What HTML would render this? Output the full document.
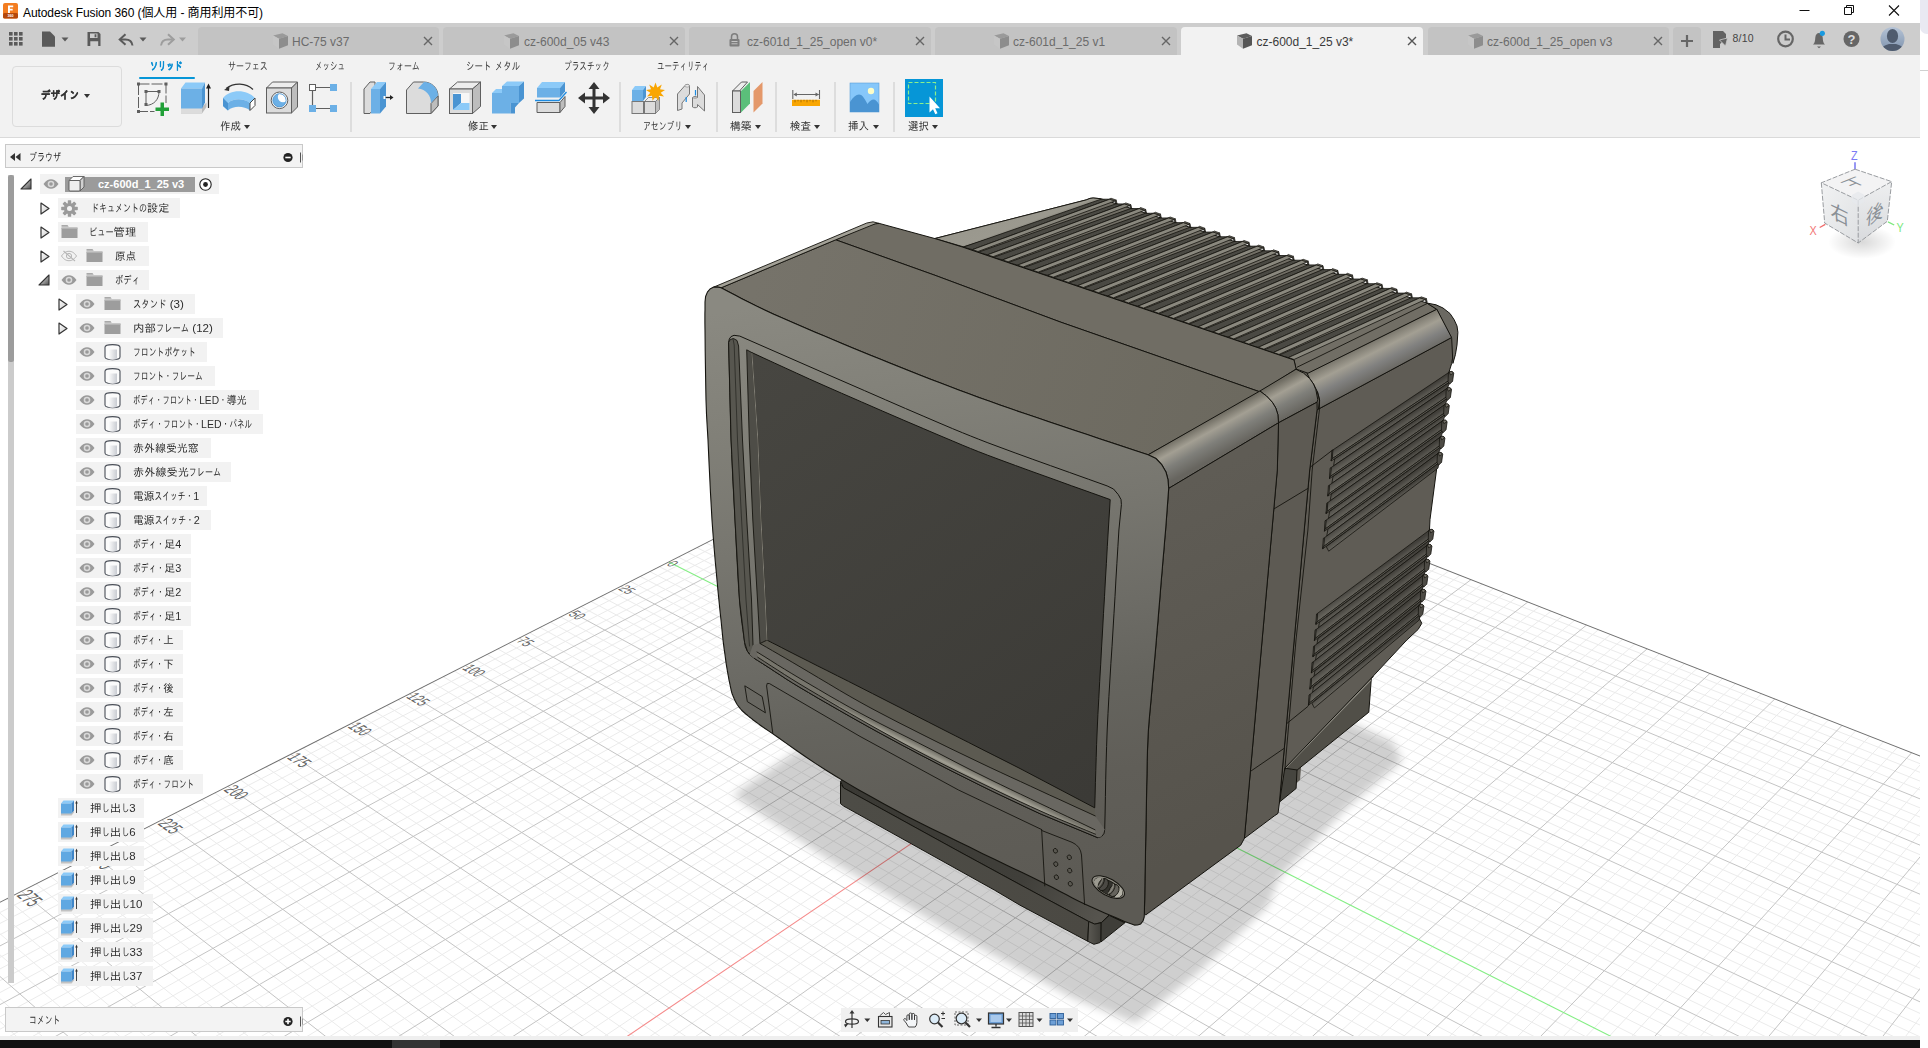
<!DOCTYPE html>
<html lang="ja"><head><meta charset="utf-8"><title>Autodesk Fusion 360</title>
<style>
html,body{margin:0;padding:0;background:#fff}
body{width:1928px;height:1048px;position:relative;overflow:hidden;font-family:"Liberation Sans","IPAGothic",sans-serif}
#canvas{position:absolute;left:0;top:0}
#nav{position:absolute;left:841px;top:1008px;width:236.5px;height:23.6px;background:#f0f0f0}
#tb{position:absolute;left:0;top:1040px;width:1920px;height:8px;background:#111}
#tb2{position:absolute;left:392px;top:1040px;width:48px;height:8px;background:#333}
#bl{position:absolute;left:0;top:1036px;width:1920px;height:4px;background:#efefef}

#title{position:absolute;left:0;top:0;width:1920px;height:23px;background:#fff}
#appico{position:absolute;left:3px;top:3px}
#ttl{position:absolute;left:23px;top:3px;font:12px "Liberation Sans","Noto Sans CJK JP",sans-serif;color:#000;white-space:nowrap;letter-spacing:-.08px}
#wc{position:absolute;left:1799px;top:0}
#tabbar{position:absolute;left:0;top:23px;width:1920px;height:32px;background:#cdcdcd}
#qa{position:absolute;left:0;top:0}
.tab{position:absolute;top:4px;height:28px;background:#c3c3c3;border-radius:4px 4px 0 0}
.tab.act{background:#f2f2f2}
.ti{position:absolute}
.tt{position:absolute;top:11.5px;font:12px "Liberation Sans",sans-serif;color:#6b6b6b;white-space:nowrap}
.tt.act{color:#3a3a3a}
#toolbar{position:absolute;left:0;top:55px;width:1920px;height:82px;background:#f2f2f2;border-bottom:1px solid #dadada}
#design{position:absolute;left:11.500px;top:10.500px;width:108px;height:59px;border:1px solid #dcdcdc;border-radius:4px;font:bold 11px "Liberation Sans","IPAGothic",sans-serif;color:#333;display:flex;align-items:center;justify-content:center;white-space:nowrap}
.k{display:inline-block;transform:scaleX(.72);transform-origin:0 50%}
.fx{display:inline-block;transform-origin:0 50%;white-space:nowrap}
.dd{display:inline-block;width:0;height:0;border-left:3.500px solid transparent;border-right:3.500px solid transparent;border-top:4px solid #333;vertical-align:middle}
.tl{position:absolute;top:4.500px;font:11px "Liberation Sans","IPAGothic",sans-serif;color:#3c3c3c;white-space:nowrap}
.tl.sel{color:#0b8fd3;font-weight:bold;-webkit-text-stroke:.35px #0b8fd3}
#ul{position:absolute;left:138.500px;top:21.800px;width:56px;height:2.600px;background:#0696d7;border-radius:1px}
.gl{position:absolute;top:65px;font:11px "Liberation Sans","IPAGothic",sans-serif;color:#333;white-space:nowrap}
.sep{position:absolute;top:27px;width:2px;height:50px;background:#dddddd}


#bh{position:absolute;left:4.500px;top:144px;width:298.500px;height:23.500px;background:#f3f3f3;border:1px solid #c9c9c9;box-sizing:border-box}
#cm{position:absolute;left:4.500px;top:1006.500px;width:298.500px;height:25px;background:#f3f3f3;border:1px solid #c9c9c9;box-sizing:border-box}
.ic{position:absolute}
.bt{position:absolute;font:11px "Liberation Sans","IPAGothic",sans-serif;color:#2e2e2e;white-space:nowrap;line-height:13px}
.rb{position:absolute;height:19.4px;background:#f2f2f2}

</style></head><body>
<svg id="canvas" width="1928" height="1048" viewBox="0 0 1928 1048">
<defs><clipPath id="cv"><rect x="0" y="138" width="1920" height="898"/></clipPath></defs>
<g clip-path="url(#cv)">
<path d="M991.9 397.6L2672.0 1060.3M984.6 401.3L2668.9 1069.4M1006.3 397.3L-581.1 1210.0M977.3 405.0L2665.8 1078.6M1014.7 400.6L-574.4 1219.4M969.9 408.8L2662.6 1087.8M1023.2 404.0L-567.6 1229.0M955.0 416.3L2656.2 1106.6M1040.2 410.7L-553.8 1248.4M947.5 420.2L2653.0 1116.2M1048.8 414.0L-546.8 1258.2M939.9 424.0L2649.7 1125.8M1057.5 417.4L-539.7 1268.1M932.3 427.9L2646.4 1135.5M1066.2 420.8L-532.5 1278.1M916.9 435.7L2639.7 1155.3M1083.7 427.7L-518.1 1298.4M909.2 439.7L2636.3 1165.4M1092.6 431.2L-510.7 1308.7M901.3 443.7L2632.8 1175.5M1101.5 434.7L-503.3 1319.1M893.5 447.7L2629.3 1185.8M1110.4 438.2L-495.8 1329.7M877.6 455.8L2622.3 1206.6M1128.5 445.3L-480.5 1351.0M869.5 459.8L2618.7 1217.2M1137.6 448.9L-472.8 1361.9M861.4 464.0L2615.0 1227.9M1146.7 452.5L-465.0 1372.8M853.3 468.1L2611.3 1238.7M1156.0 456.1L-457.1 1383.9M836.9 476.5L2603.9 1260.7M1174.6 463.4L-441.1 1406.3M828.6 480.7L2600.1 1271.8M1183.9 467.1L-432.9 1417.8M820.2 484.9L2596.2 1283.1M1193.4 470.8L-424.7 1429.3M811.8 489.2L2592.3 1294.5M1202.9 474.5L-416.4 1440.9M794.8 497.9L2584.4 1317.8M1222.0 482.0L-399.5 1464.6M786.2 502.2L2580.4 1329.6M1231.7 485.8L-390.9 1476.6M777.6 506.6L2576.4 1341.5M1241.4 489.6L-382.2 1488.8M768.8 511.1L2572.3 1353.6M1251.2 493.4L-373.5 1501.1M751.2 520.0L2563.9 1378.2M1270.9 501.2L-355.7 1526.1M742.4 524.6L2559.7 1390.7M1280.8 505.1L-346.6 1538.8M733.4 529.1L2555.4 1403.3M1290.9 509.0L-337.4 1551.6M724.4 533.7L2551.0 1416.1M1300.9 513.0L-328.2 1564.6M706.2 543.0L2542.2 1442.2M1321.3 521.0L-309.4 1591.0M697.0 547.7L2537.6 1455.4M1331.5 525.0L-299.8 1604.4M687.7 552.4L2533.1 1468.8M1341.9 529.1L-290.1 1618.0M678.3 557.1L2528.5 1482.4M1352.3 533.1L-280.3 1631.7M659.4 566.7L2519.1 1510.1M1373.2 541.4L-260.4 1659.6M649.9 571.6L2514.3 1524.2M1383.8 545.5L-250.2 1673.9M640.3 576.5L2509.4 1538.4M1394.5 549.7L-240.0 1688.2M630.6 581.4L2504.5 1552.9M1405.2 553.9L-229.6 1702.8M611.0 591.4L2494.5 1582.3M1426.9 562.4L-208.5 1732.4M601.1 596.4L2489.4 1597.3M1437.8 566.7L-197.7 1747.5M591.1 601.5L2484.2 1612.5M1448.8 571.0L-186.8 1762.7M581.1 606.6L2479.0 1627.8M1459.8 575.4L-175.8 1778.2M560.8 617.0L2468.4 1659.2M1482.2 584.1L-153.4 1809.6M550.5 622.2L2462.9 1675.2M1493.5 588.6L-142.0 1825.6M540.1 627.4L2457.4 1691.4M1504.8 593.0L-130.4 1841.8M529.7 632.8L2451.8 1707.8M1516.3 597.5L-118.7 1858.2M508.6 643.5L2440.4 1741.3M1539.4 606.6L-94.8 1891.7M497.9 648.9L2434.6 1758.4M1551.0 611.2L-82.7 1908.7M487.2 654.4L2428.7 1775.7M1562.8 615.8L-70.4 1926.0M476.3 659.9L2422.8 1793.3M1574.6 620.4L-57.9 1943.5M454.4 671.1L2410.6 1829.1M1598.4 629.8L-32.4 1979.2M443.3 676.7L2404.3 1847.5M1610.5 634.5L-19.5 1997.3M432.2 682.4L2398.0 1866.0M1622.6 639.3L-6.3 2015.8M420.9 688.1L2391.6 1884.9M1634.8 644.0L7.0 2034.4M398.1 699.7L2378.5 1923.3M1659.5 653.7L34.2 2072.5M386.6 705.6L2371.9 1943.0M1672.0 658.6L48.0 2092.0M374.9 711.5L2365.1 1963.0M1684.5 663.6L62.1 2111.7M363.2 717.5L2358.2 1983.2M1697.1 668.5L76.4 2131.7M339.5 729.6L2344.1 2024.6M1722.7 678.5L105.5 2172.4M327.5 735.7L2336.9 2045.8M1735.6 683.6L120.3 2193.3M315.4 741.8L2329.6 2067.3M1748.6 688.7L135.4 2214.4M303.1 748.0L2322.2 2089.1M1761.6 693.8L150.7 2235.8M278.4 760.6L2307.0 2133.8M1788.1 704.2L181.9 2279.6M265.9 767.0L2299.2 2156.6M1801.4 709.4L197.8 2302.0M253.3 773.4L2291.3 2179.9M1814.9 714.7L214.0 2324.7M240.6 779.9L2283.3 2203.5M1828.4 720.0L230.5 2347.7M214.8 793.0L2266.9 2251.8M1855.8 730.8L264.1 2394.8M201.8 799.6L2258.4 2276.6M1869.6 736.2L281.3 2418.9M188.6 806.3L2249.9 2301.7M1883.6 741.7L298.7 2443.4M175.4 813.1L2241.2 2327.3M1897.6 747.2L316.4 2468.2M148.5 826.7L2223.3 2379.8M1926.0 758.3L352.7 2519.0M134.9 833.7L2214.2 2406.7M1940.3 764.0L371.2 2545.0M121.1 840.7L2204.9 2434.1M1954.8 769.6L390.1 2571.5M107.3 847.7L2195.4 2461.9M1969.3 775.4L409.3 2598.3M79.2 862.0L2176.0 2519.1M1998.8 786.9L448.5 2653.3M65.0 869.2L2166.0 2548.5M2013.7 792.8L468.6 2681.5M50.6 876.5L2155.8 2578.3M2028.6 798.6L489.0 2710.2M36.2 883.9L2145.5 2608.8M2043.8 804.6L509.8 2739.3M6.8 898.8L2124.2 2671.3M2074.3 816.6L552.4 2799.0M-8.0 906.4L2113.3 2703.4M2089.8 822.6L574.3 2829.7M-23.1 914.0L2102.2 2736.2M2105.3 828.7L596.5 2860.8M-38.2 921.7L2090.8 2769.6M2121.0 834.9L619.1 2892.5M-68.9 937.4L2067.5 2838.2M2152.8 847.4L665.6 2957.6M-84.5 945.3L2055.4 2873.6M2168.8 853.7L689.4 2991.0M-100.2 953.3L2043.2 2909.6M2185.0 860.0L713.7 3025.1M-116.0 961.3L2030.7 2946.4M2201.3 866.4L738.4 3059.7M-148.2 977.7L2004.9 3022.1M2234.3 879.4L789.2 3130.9M-164.5 986.0L1991.6 3061.2M2251.0 885.9L815.3 3167.5M-181.0 994.4L1978.1 3101.1M2267.8 892.5L841.9 3204.8M-197.6 1002.8L1964.3 3141.8M2284.7 899.2L869.0 3242.8M-231.3 1020.0L1935.7 3225.8M2319.1 912.6L924.8 3321.0M-248.4 1028.7L1920.9 3269.2M2336.4 919.5L953.5 3361.3M-265.7 1037.5L1905.9 3313.5M2353.9 926.3L982.8 3402.3M-283.1 1046.4L1890.4 3358.8M2371.6 933.3L1012.7 3444.2M-318.5 1064.4L1858.6 3452.5M2407.3 947.3L1074.3 3530.5M-336.5 1073.5L1842.1 3501.0M2425.4 954.4L1106.0 3575.0M-354.6 1082.7L1825.2 3550.6M2443.6 961.5L1138.4 3620.5M-373.0 1092.1L1808.0 3601.4M2462.0 968.7L1171.5 3666.8M-410.2 1111.0L1772.2 3706.5M2499.2 983.4L1239.8 3762.6M-429.1 1120.6L1753.7 3761.0M2518.1 990.8L1275.1 3812.0M-448.1 1130.3L1734.7 3816.9M2537.1 998.2L1311.1 3862.6M-467.4 1140.1L1715.2 3874.1M2556.3 1005.7L1348.0 3914.2M-506.6 1160.1L1674.8 3993.0M2595.1 1021.0L1424.2 4021.0M-526.5 1170.2L1653.8 4054.7M2614.7 1028.7L1463.6 4076.3M-546.6 1180.4L1632.3 4118.1M2634.6 1036.5L1503.9 4132.8M-566.9 1190.7L1610.2 4183.1M2654.6 1044.3L1545.2 4190.7" stroke="#ebebeb" stroke-width="1" fill="none"/>
<path d="M962.5 412.5L2659.4 1097.2M1031.7 407.3L-560.7 1238.6M924.6 431.8L2643.1 1145.4M1074.9 424.3L-525.3 1288.2M885.5 451.7L2625.8 1196.1M1119.4 441.7L-488.2 1340.3M845.1 472.3L2607.6 1249.6M1165.2 459.7L-449.1 1395.1M803.3 493.5L2588.4 1306.1M1212.4 478.2L-408.0 1452.7M760.1 515.5L2568.1 1365.8M1261.0 497.3L-364.6 1513.5M715.3 538.3L2546.6 1429.1M1311.1 517.0L-318.8 1577.7M620.8 586.4L2499.5 1567.5M1416.0 558.2L-219.1 1717.5M571.0 611.8L2473.7 1643.4M1471.0 579.7L-164.7 1793.8M519.2 638.1L2446.2 1724.4M1527.8 602.0L-106.8 1874.9M465.4 665.5L2416.7 1811.1M1586.5 625.1L-45.2 1961.2M409.5 693.9L2385.1 1904.0M1647.1 648.9L20.5 2053.4M351.4 723.5L2351.2 2003.8M1709.9 673.5L90.8 2151.9M290.8 754.3L2314.6 2111.3M1774.8 699.0L166.2 2257.6M227.8 786.4L2275.1 2227.4M1842.0 725.4L247.1 2371.1M162.0 819.9L2232.3 2353.3M1911.7 752.7L334.4 2493.4M93.3 854.8L2185.8 2490.3M1984.0 781.1L428.7 2625.6M21.6 891.3L2135.0 2639.7M2059.0 810.5L530.9 2768.9M-53.5 929.5L2079.3 2803.6M2136.8 841.1L642.1 2924.8M-132.0 969.5L2017.9 2983.9M2217.7 872.9L763.6 3095.0M-214.4 1011.4L1950.1 3183.3M2301.8 905.9L896.6 3281.5M-300.7 1055.3L1874.7 3405.2M2389.4 940.2L1043.2 3486.9M-391.5 1101.5L1790.3 3653.3M2480.5 976.0L1205.3 3714.2M-486.9 1150.1L1695.3 3932.8M2575.6 1013.3L1385.6 3967.0M-587.4 1201.2L1587.5 4249.9M2674.7 1052.2L1587.5 4249.9" stroke="#c4c4c4" stroke-width="1" fill="none"/>
<line x1="668.9" y1="561.9" x2="2523.8" y2="1496.2" stroke="#84ee84" stroke-width="1.1" />
<line x1="1362.7" y1="537.2" x2="-270.4" y2="1645.6" stroke="#f58a8a" stroke-width="1.1" />
<line x1="998.4" y1="394.2" x2="-587.4" y2="1201.2" stroke="#6e6e6e" stroke-width="1.05" />
<line x1="998.4" y1="394.2" x2="2674.7" y2="1052.2" stroke="#6e6e6e" stroke-width="1.05" />
<text transform="matrix(1.3264 0.6702 -1.8956 0.9654 665.8 564.7)" font-family="Liberation Sans, sans-serif" font-size="6.8" fill="#454545" fill-opacity=".85">0</text>
<text transform="matrix(1.3263 0.6950 -1.9658 1.0012 617.5 589.3)" font-family="Liberation Sans, sans-serif" font-size="6.8" fill="#454545" fill-opacity=".85">25</text>
<text transform="matrix(1.3253 0.7211 -2.0399 1.0389 567.5 614.8)" font-family="Liberation Sans, sans-serif" font-size="6.8" fill="#454545" fill-opacity=".85">50</text>
<text transform="matrix(1.3233 0.7487 -2.1184 1.0789 515.5 641.3)" font-family="Liberation Sans, sans-serif" font-size="6.8" fill="#454545" fill-opacity=".85">75</text>
<text transform="matrix(1.3201 0.7780 -2.2014 1.1212 461.6 668.7)" font-family="Liberation Sans, sans-serif" font-size="6.8" fill="#454545" fill-opacity=".85">100</text>
<text transform="matrix(1.3156 0.8090 -2.2894 1.1660 405.5 697.3)" font-family="Liberation Sans, sans-serif" font-size="6.8" fill="#454545" fill-opacity=".85">125</text>
<text transform="matrix(1.3096 0.8419 -2.3828 1.2136 347.1 727.0)" font-family="Liberation Sans, sans-serif" font-size="6.8" fill="#454545" fill-opacity=".85">150</text>
<text transform="matrix(1.3021 0.8769 -2.4821 1.2641 286.3 758.0)" font-family="Liberation Sans, sans-serif" font-size="6.8" fill="#454545" fill-opacity=".85">175</text>
<text transform="matrix(1.2927 0.9140 -2.5877 1.3179 223.0 790.2)" font-family="Liberation Sans, sans-serif" font-size="6.8" fill="#454545" fill-opacity=".85">200</text>
<text transform="matrix(1.2813 0.9536 -2.7001 1.3752 156.9 823.9)" font-family="Liberation Sans, sans-serif" font-size="6.8" fill="#454545" fill-opacity=".85">225</text>
<text transform="matrix(1.2677 0.9959 -2.8201 1.4363 88.0 859.0)" font-family="Liberation Sans, sans-serif" font-size="6.8" fill="#454545" fill-opacity=".85">250</text>
<text transform="matrix(1.2515 1.0410 -2.9482 1.5015 15.9 895.7)" font-family="Liberation Sans, sans-serif" font-size="6.8" fill="#454545" fill-opacity=".85">275</text>
<defs><filter id="blur" x="-10%" y="-10%" width="120%" height="120%"><feGaussianBlur stdDeviation="4.500"/></filter></defs>
<path d="M795 752 L733 795 L824.500 857 L949 931 L1073 998 L1135.600 1023 L1198 973 L1268 906 L1279 878 L1347 808 L1402 761 L1393 742 L1347 721 L1300 700 L1150 700 Z" fill="#000" fill-opacity=".19" filter="url(#blur)"/>
<defs>
<linearGradient id="gFF" gradientUnits="userSpaceOnUse" x1="860" y1="290" x2="960" y2="925"><stop offset="0" stop-color="#8a8981"/><stop offset=".17" stop-color="#828179"/><stop offset=".38" stop-color="#77766f"/><stop offset=".54" stop-color="#6d6c66"/><stop offset=".66" stop-color="#65645e"/><stop offset=".8" stop-color="#605e58"/><stop offset="1" stop-color="#5c5a54"/></linearGradient>
<linearGradient id="gTop" gradientUnits="userSpaceOnUse" x1="760" y1="270" x2="1240" y2="420"><stop offset="0" stop-color="#76736a"/><stop offset="1" stop-color="#6c695f"/></linearGradient>
<linearGradient id="gSide" gradientUnits="userSpaceOnUse" x1="1150" y1="500" x2="1300" y2="800"><stop offset="0" stop-color="#5f5c55"/><stop offset="1" stop-color="#56534c"/></linearGradient>
<linearGradient id="gScr" gradientUnits="userSpaceOnUse" x1="760" y1="360" x2="1090" y2="800"><stop offset="0" stop-color="#474641"/><stop offset="1" stop-color="#3b3a36"/></linearGradient>
<linearGradient id="gFil" gradientUnits="userSpaceOnUse" x1="1200" y1="425" x2="1217" y2="456"><stop offset="0" stop-color="#6f6c62"/><stop offset=".3" stop-color="#a39f93"/><stop offset=".62" stop-color="#7f7f7a"/><stop offset="1" stop-color="#67655f"/></linearGradient>
<linearGradient id="gFilR" gradientUnits="userSpaceOnUse" x1="1375" y1="340" x2="1391" y2="372"><stop offset="0" stop-color="#7a776d"/><stop offset=".3" stop-color="#a39f93"/><stop offset=".62" stop-color="#818180"/><stop offset="1" stop-color="#67655f"/></linearGradient>
<linearGradient id="gFilL" gradientUnits="userSpaceOnUse" x1="1010" y1="219" x2="1016" y2="236"><stop offset="0" stop-color="#9a988e"/><stop offset=".5" stop-color="#9b998f"/><stop offset="1" stop-color="#66645c"/></linearGradient>
<linearGradient id="gStand" gradientUnits="userSpaceOnUse" x1="850" y1="790" x2="1090" y2="930"><stop offset="0" stop-color="#4d4c46"/><stop offset="1" stop-color="#4b4943"/></linearGradient>
</defs>
<polygon points="1250.0,380.0 1330.0,365.0 1330.0,420.0 1300.0,780.0 1245.0,830.0" fill="#5d5a53" stroke="none" stroke-width="1" stroke-linejoin="round" />
<polygon points="1281.5,770.0 1297.3,764.0 1296.1,788.5 1279.3,802.2" fill="#46453f" stroke="#15140f" stroke-width="1" stroke-linejoin="round" />
<polygon points="1373.2,676.1 1371.3,678.6 1368.8,712.2 1297.2,770.0 1284.8,768.2" fill="#514f48" stroke="#15140f" stroke-width="1" stroke-linejoin="round" />
<polyline points="1286.2,767.2 1370.6,680.2" fill="none" stroke="#8d8b82" stroke-width="1.3" stroke-linejoin="round" stroke-linecap="round" />
<defs><linearGradient id="gStTop" gradientUnits="userSpaceOnUse" x1="850" y1="780" x2="1100" y2="915"><stop offset="0" stop-color="#3a3934"/><stop offset=".7" stop-color="#403f3a"/><stop offset="1" stop-color="#56544e"/></linearGradient><linearGradient id="gStC" gradientUnits="userSpaceOnUse" x1="1088" y1="930" x2="1102" y2="930"><stop offset="0" stop-color="#5b5953"/><stop offset="1" stop-color="#3d3c37"/></linearGradient></defs>
<polygon points="840.5,781.2 843.7,788.0 900.0,819.0 960.0,852.0 1020.0,884.6 1088.7,921.5 1094.7,924.1 1101.6,922.4 1109.3,914.7 1124.8,922.8 1130.0,915.0 1100.0,895.0 850.0,772.0" fill="url(#gStTop)" stroke="#15140f" stroke-width="1" stroke-linejoin="round" />
<polygon points="840.5,782.4 840.5,803.6 843.7,806.1 994.3,890.0 1020.0,905.2 1087.8,941.3 1088.7,921.5 1020.0,884.6 960.0,852.0 900.0,819.0 843.7,788.0 841.5,785.5" fill="url(#gStand)" stroke="#15140f" stroke-width="1" stroke-linejoin="round" />
<polygon points="1088.7,921.5 1094.7,924.1 1101.2,922.8 1101.2,941.3 1099.9,942.6 1093.9,944.3 1087.8,941.3" fill="url(#gStC)" stroke="#15140f" stroke-width="1" stroke-linejoin="round" />
<polygon points="1101.2,922.8 1109.3,915.5 1124.8,922.8 1100.9,942.0" fill="#3f3e39" stroke="#15140f" stroke-width="1" stroke-linejoin="round" />
<polygon points="1318.4,409.1 1451.6,337.5 1455.3,342.5 1451.6,363.7 1449.0,372.0 1437.6,455.0 1436.5,470.0 1430.0,519.5 1429.4,531.2 1419.5,605.9 1419.0,618.0 1421.8,623.3 1418.1,629.5 1406.8,640.0 1373.2,676.1 1284.8,768.2 1279.3,803.5 1282.3,770.0 1309.7,470.0 1317.1,409.7" fill="#5f5c55" stroke="#15140f" stroke-width="1" stroke-linejoin="round" />
<linearGradient id="lv1" gradientUnits="userSpaceOnUse" x1="1391.3" y1="410.9" x2="1395.6" y2="417.6"><stop offset="0" stop-color="#413f3a"/><stop offset=".45" stop-color="#55534d"/><stop offset="1" stop-color="#69675f"/></linearGradient>
<polygon points="1332.8,450.0 1449.8,371.8 1450.0,379.8 1331.5,459.2" fill="url(#lv1)" stroke="#15140f" stroke-width="0.8" stroke-linejoin="round" />
<linearGradient id="lv2" gradientUnits="userSpaceOnUse" x1="1392.3" y1="420.2" x2="1395.6" y2="425.3"><stop offset="0" stop-color="#3f3d38"/><stop offset=".45" stop-color="#55534d"/><stop offset="1" stop-color="#64625b"/></linearGradient>
<polygon points="1334.7,458.8 1450.0,381.6 1447.6,388.0 1333.6,465.8" fill="url(#lv2)" stroke="#15140f" stroke-width="0.8" stroke-linejoin="round" />
<polygon points="1331.5,459.2 1450.0,379.8 1450.0,381.6 1331.2,461.0" fill="#68665f" stroke="#15140f" stroke-width="0.8" stroke-linejoin="round" />
<polygon points="1331.8,450.6 1332.8,450.0 1332.4,458.8 1331.5,459.2 1331.2,461.0" fill="#68665f" stroke="#15140f" stroke-width="0.8" stroke-linejoin="round" />
<path d="M1448.8 372.2Q1452.4 370.0 1453.7 373.4L1452.6 381.2L1449.6 384.2L1448.2 382.0Z" fill="#4d4b45" stroke="#15140f" stroke-width="0.8" stroke-linejoin="round" stroke-linecap="round" />
<path d="M1449.6 372.0Q1452.4 370.4 1453.4 373.2L1450.8 374.8Z" fill="#726f67" stroke="#15140f" stroke-width="0.7" stroke-linejoin="round" stroke-linecap="round" />
<linearGradient id="lv3" gradientUnits="userSpaceOnUse" x1="1389.3" y1="427.8" x2="1393.7" y2="434.5"><stop offset="0" stop-color="#413f3a"/><stop offset=".45" stop-color="#55534d"/><stop offset="1" stop-color="#69675f"/></linearGradient>
<polygon points="1331.1,467.6 1447.6,388.0 1447.8,396.0 1329.8,476.8" fill="url(#lv3)" stroke="#15140f" stroke-width="0.8" stroke-linejoin="round" />
<linearGradient id="lv4" gradientUnits="userSpaceOnUse" x1="1390.4" y1="437.1" x2="1393.7" y2="442.1"><stop offset="0" stop-color="#3f3d38"/><stop offset=".45" stop-color="#55534d"/><stop offset="1" stop-color="#64625b"/></linearGradient>
<polygon points="1333.0,476.4 1447.8,397.8 1445.4,404.2 1331.9,483.3" fill="url(#lv4)" stroke="#15140f" stroke-width="0.8" stroke-linejoin="round" />
<polygon points="1329.8,476.8 1447.8,396.0 1447.8,397.8 1329.5,478.6" fill="#68665f" stroke="#15140f" stroke-width="0.8" stroke-linejoin="round" />
<polygon points="1330.1,468.2 1331.1,467.6 1330.7,476.4 1329.8,476.8 1329.5,478.6" fill="#68665f" stroke="#15140f" stroke-width="0.8" stroke-linejoin="round" />
<path d="M1446.6 388.4Q1450.2 386.2 1451.5 389.6L1450.4 397.4L1447.4 400.4L1446.0 398.2Z" fill="#4d4b45" stroke="#15140f" stroke-width="0.8" stroke-linejoin="round" stroke-linecap="round" />
<path d="M1447.4 388.2Q1450.2 386.6 1451.2 389.4L1448.6 391.0Z" fill="#726f67" stroke="#15140f" stroke-width="0.7" stroke-linejoin="round" stroke-linecap="round" />
<linearGradient id="lv5" gradientUnits="userSpaceOnUse" x1="1387.4" y1="444.6" x2="1391.8" y2="451.3"><stop offset="0" stop-color="#413f3a"/><stop offset=".45" stop-color="#55534d"/><stop offset="1" stop-color="#69675f"/></linearGradient>
<polygon points="1329.4,485.1 1445.4,404.2 1445.6,412.2 1328.1,494.3" fill="url(#lv5)" stroke="#15140f" stroke-width="0.8" stroke-linejoin="round" />
<linearGradient id="lv6" gradientUnits="userSpaceOnUse" x1="1388.4" y1="454.0" x2="1391.8" y2="458.9"><stop offset="0" stop-color="#3f3d38"/><stop offset=".45" stop-color="#55534d"/><stop offset="1" stop-color="#64625b"/></linearGradient>
<polygon points="1331.3,493.9 1445.6,414.0 1443.2,420.4 1330.2,500.9" fill="url(#lv6)" stroke="#15140f" stroke-width="0.8" stroke-linejoin="round" />
<polygon points="1328.1,494.3 1445.6,412.2 1445.6,414.0 1327.8,496.1" fill="#68665f" stroke="#15140f" stroke-width="0.8" stroke-linejoin="round" />
<polygon points="1328.4,485.7 1329.4,485.1 1329.0,493.9 1328.1,494.3 1327.8,496.1" fill="#68665f" stroke="#15140f" stroke-width="0.8" stroke-linejoin="round" />
<path d="M1444.4 404.6Q1448.0 402.4 1449.3 405.8L1448.2 413.6L1445.2 416.6L1443.8 414.4Z" fill="#4d4b45" stroke="#15140f" stroke-width="0.8" stroke-linejoin="round" stroke-linecap="round" />
<path d="M1445.2 404.4Q1448.0 402.8 1449.0 405.6L1446.4 407.2Z" fill="#726f67" stroke="#15140f" stroke-width="0.7" stroke-linejoin="round" stroke-linecap="round" />
<linearGradient id="lv7" gradientUnits="userSpaceOnUse" x1="1385.5" y1="461.5" x2="1390.0" y2="468.1"><stop offset="0" stop-color="#413f3a"/><stop offset=".45" stop-color="#55534d"/><stop offset="1" stop-color="#69675f"/></linearGradient>
<polygon points="1327.7,502.6 1443.2,420.4 1443.4,428.4 1326.4,511.9" fill="url(#lv7)" stroke="#15140f" stroke-width="0.8" stroke-linejoin="round" />
<linearGradient id="lv8" gradientUnits="userSpaceOnUse" x1="1386.5" y1="470.8" x2="1389.9" y2="475.8"><stop offset="0" stop-color="#3f3d38"/><stop offset=".45" stop-color="#55534d"/><stop offset="1" stop-color="#64625b"/></linearGradient>
<polygon points="1329.6,511.4 1443.4,430.2 1441.0,436.6 1328.5,518.4" fill="url(#lv8)" stroke="#15140f" stroke-width="0.8" stroke-linejoin="round" />
<polygon points="1326.4,511.9 1443.4,428.4 1443.4,430.2 1326.1,513.6" fill="#68665f" stroke="#15140f" stroke-width="0.8" stroke-linejoin="round" />
<polygon points="1326.7,503.2 1327.7,502.6 1327.3,511.4 1326.4,511.9 1326.1,513.6" fill="#68665f" stroke="#15140f" stroke-width="0.8" stroke-linejoin="round" />
<path d="M1442.2 420.8Q1445.8 418.6 1447.1 422.0L1446.0 429.8L1443.0 432.8L1441.6 430.6Z" fill="#4d4b45" stroke="#15140f" stroke-width="0.8" stroke-linejoin="round" stroke-linecap="round" />
<path d="M1443.0 420.6Q1445.8 419.0 1446.8 421.8L1444.2 423.4Z" fill="#726f67" stroke="#15140f" stroke-width="0.7" stroke-linejoin="round" stroke-linecap="round" />
<linearGradient id="lv9" gradientUnits="userSpaceOnUse" x1="1383.5" y1="478.4" x2="1388.1" y2="485.0"><stop offset="0" stop-color="#413f3a"/><stop offset=".45" stop-color="#55534d"/><stop offset="1" stop-color="#69675f"/></linearGradient>
<polygon points="1326.0,520.2 1441.0,436.6 1441.2,444.6 1324.7,529.4" fill="url(#lv9)" stroke="#15140f" stroke-width="0.8" stroke-linejoin="round" />
<linearGradient id="lv10" gradientUnits="userSpaceOnUse" x1="1384.6" y1="487.7" x2="1388.0" y2="492.6"><stop offset="0" stop-color="#3f3d38"/><stop offset=".45" stop-color="#55534d"/><stop offset="1" stop-color="#64625b"/></linearGradient>
<polygon points="1327.9,529.0 1441.2,446.4 1438.8,452.8 1326.8,536.0" fill="url(#lv10)" stroke="#15140f" stroke-width="0.8" stroke-linejoin="round" />
<polygon points="1324.7,529.4 1441.2,444.6 1441.2,446.4 1324.4,531.2" fill="#68665f" stroke="#15140f" stroke-width="0.8" stroke-linejoin="round" />
<polygon points="1325.0,520.8 1326.0,520.2 1325.6,529.0 1324.7,529.4 1324.4,531.2" fill="#68665f" stroke="#15140f" stroke-width="0.8" stroke-linejoin="round" />
<path d="M1440.0 437.0Q1443.6 434.8 1444.9 438.2L1443.8 446.0L1440.8 449.0L1439.4 446.8Z" fill="#4d4b45" stroke="#15140f" stroke-width="0.8" stroke-linejoin="round" stroke-linecap="round" />
<path d="M1440.8 436.8Q1443.6 435.2 1444.6 438.0L1442.0 439.6Z" fill="#726f67" stroke="#15140f" stroke-width="0.7" stroke-linejoin="round" stroke-linecap="round" />
<linearGradient id="lv11" gradientUnits="userSpaceOnUse" x1="1381.6" y1="495.3" x2="1386.2" y2="501.8"><stop offset="0" stop-color="#413f3a"/><stop offset=".45" stop-color="#55534d"/><stop offset="1" stop-color="#69675f"/></linearGradient>
<polygon points="1324.3,537.8 1438.8,452.8 1439.0,460.8 1323.0,547.0" fill="url(#lv11)" stroke="#15140f" stroke-width="0.8" stroke-linejoin="round" />
<linearGradient id="lv12" gradientUnits="userSpaceOnUse" x1="1382.6" y1="504.6" x2="1386.1" y2="509.5"><stop offset="0" stop-color="#3f3d38"/><stop offset=".45" stop-color="#55534d"/><stop offset="1" stop-color="#64625b"/></linearGradient>
<polygon points="1326.2,546.5 1439.0,462.6 1438.0,468.1 1328.7,551.2" fill="url(#lv12)" stroke="#15140f" stroke-width="0.8" stroke-linejoin="round" />
<polygon points="1323.0,547.0 1439.0,460.8 1439.0,462.6 1322.7,548.8" fill="#68665f" stroke="#15140f" stroke-width="0.8" stroke-linejoin="round" />
<polygon points="1323.3,538.4 1324.3,537.8 1323.9,546.6 1323.0,547.0 1322.7,548.8" fill="#68665f" stroke="#15140f" stroke-width="0.8" stroke-linejoin="round" />
<path d="M1437.8 453.2Q1441.4 451.0 1442.7 454.4L1441.6 462.2L1438.6 465.2L1437.2 463.0Z" fill="#4d4b45" stroke="#15140f" stroke-width="0.8" stroke-linejoin="round" stroke-linecap="round" />
<path d="M1438.6 453.0Q1441.4 451.4 1442.4 454.2L1439.8 455.8Z" fill="#726f67" stroke="#15140f" stroke-width="0.7" stroke-linejoin="round" stroke-linecap="round" />
<polyline points="1310.6,466.9 1332.4,450.2" fill="none" stroke="#15140f" stroke-width="0.9" stroke-linejoin="round" stroke-linecap="round" />
<polyline points="1285.5,724.6 1307.8,706.5" fill="none" stroke="#15140f" stroke-width="0.9" stroke-linejoin="round" stroke-linecap="round" />
<linearGradient id="lv13" gradientUnits="userSpaceOnUse" x1="1373.8" y1="571.5" x2="1378.4" y2="578.1"><stop offset="0" stop-color="#413f3a"/><stop offset=".45" stop-color="#55534d"/><stop offset="1" stop-color="#69675f"/></linearGradient>
<polygon points="1317.5,613.4 1430.0,529.7 1430.2,537.7 1316.2,622.6" fill="url(#lv13)" stroke="#15140f" stroke-width="0.8" stroke-linejoin="round" />
<linearGradient id="lv14" gradientUnits="userSpaceOnUse" x1="1374.8" y1="580.8" x2="1378.3" y2="585.7"><stop offset="0" stop-color="#3f3d38"/><stop offset=".45" stop-color="#55534d"/><stop offset="1" stop-color="#64625b"/></linearGradient>
<polygon points="1319.4,622.2 1430.2,539.5 1428.0,544.7 1318.5,627.8" fill="url(#lv14)" stroke="#15140f" stroke-width="0.8" stroke-linejoin="round" />
<polygon points="1316.2,622.6 1430.2,537.7 1430.2,539.5 1315.9,624.4" fill="#68665f" stroke="#15140f" stroke-width="0.8" stroke-linejoin="round" />
<polygon points="1316.5,614.0 1317.5,613.4 1317.1,622.2 1316.2,622.6 1315.9,624.4" fill="#68665f" stroke="#15140f" stroke-width="0.8" stroke-linejoin="round" />
<path d="M1429.0 530.1Q1432.6 527.9 1433.9 531.3L1432.8 539.1L1429.8 542.1L1428.4 539.9Z" fill="#4d4b45" stroke="#15140f" stroke-width="0.8" stroke-linejoin="round" stroke-linecap="round" />
<path d="M1429.8 529.9Q1432.6 528.3 1433.6 531.1L1431.0 532.7Z" fill="#726f67" stroke="#15140f" stroke-width="0.7" stroke-linejoin="round" stroke-linecap="round" />
<linearGradient id="lv15" gradientUnits="userSpaceOnUse" x1="1372.0" y1="587.2" x2="1376.7" y2="593.6"><stop offset="0" stop-color="#413f3a"/><stop offset=".45" stop-color="#55534d"/><stop offset="1" stop-color="#69675f"/></linearGradient>
<polygon points="1316.0,629.6 1428.0,544.7 1428.2,552.7 1314.7,638.8" fill="url(#lv15)" stroke="#15140f" stroke-width="0.8" stroke-linejoin="round" />
<linearGradient id="lv16" gradientUnits="userSpaceOnUse" x1="1373.0" y1="596.5" x2="1376.6" y2="601.3"><stop offset="0" stop-color="#3f3d38"/><stop offset=".45" stop-color="#55534d"/><stop offset="1" stop-color="#64625b"/></linearGradient>
<polygon points="1317.9,638.4 1428.2,554.5 1426.0,559.7 1317.0,644.0" fill="url(#lv16)" stroke="#15140f" stroke-width="0.8" stroke-linejoin="round" />
<polygon points="1314.7,638.8 1428.2,552.7 1428.2,554.5 1314.4,640.6" fill="#68665f" stroke="#15140f" stroke-width="0.8" stroke-linejoin="round" />
<polygon points="1315.0,630.2 1316.0,629.6 1315.6,638.4 1314.7,638.8 1314.4,640.6" fill="#68665f" stroke="#15140f" stroke-width="0.8" stroke-linejoin="round" />
<path d="M1427.0 545.1Q1430.6 542.9 1431.9 546.3L1430.8 554.1L1427.8 557.1L1426.4 554.9Z" fill="#4d4b45" stroke="#15140f" stroke-width="0.8" stroke-linejoin="round" stroke-linecap="round" />
<path d="M1427.8 544.9Q1430.6 543.3 1431.6 546.1L1429.0 547.7Z" fill="#726f67" stroke="#15140f" stroke-width="0.7" stroke-linejoin="round" stroke-linecap="round" />
<linearGradient id="lv17" gradientUnits="userSpaceOnUse" x1="1370.2" y1="602.8" x2="1375.0" y2="609.2"><stop offset="0" stop-color="#413f3a"/><stop offset=".45" stop-color="#55534d"/><stop offset="1" stop-color="#69675f"/></linearGradient>
<polygon points="1314.5,645.8 1426.0,559.7 1426.2,567.7 1313.2,655.0" fill="url(#lv17)" stroke="#15140f" stroke-width="0.8" stroke-linejoin="round" />
<linearGradient id="lv18" gradientUnits="userSpaceOnUse" x1="1371.3" y1="612.0" x2="1374.9" y2="616.9"><stop offset="0" stop-color="#3f3d38"/><stop offset=".45" stop-color="#55534d"/><stop offset="1" stop-color="#64625b"/></linearGradient>
<polygon points="1316.4,654.6 1426.2,569.5 1424.0,574.7 1315.5,660.2" fill="url(#lv18)" stroke="#15140f" stroke-width="0.8" stroke-linejoin="round" />
<polygon points="1313.2,655.0 1426.2,567.7 1426.2,569.5 1312.9,656.8" fill="#68665f" stroke="#15140f" stroke-width="0.8" stroke-linejoin="round" />
<polygon points="1313.5,646.4 1314.5,645.8 1314.1,654.6 1313.2,655.0 1312.9,656.8" fill="#68665f" stroke="#15140f" stroke-width="0.8" stroke-linejoin="round" />
<path d="M1425.0 560.1Q1428.6 557.9 1429.9 561.3L1428.8 569.1L1425.8 572.1L1424.4 569.9Z" fill="#4d4b45" stroke="#15140f" stroke-width="0.8" stroke-linejoin="round" stroke-linecap="round" />
<path d="M1425.8 559.9Q1428.6 558.3 1429.6 561.1L1427.0 562.7Z" fill="#726f67" stroke="#15140f" stroke-width="0.7" stroke-linejoin="round" stroke-linecap="round" />
<linearGradient id="lv19" gradientUnits="userSpaceOnUse" x1="1368.5" y1="618.4" x2="1373.3" y2="624.7"><stop offset="0" stop-color="#413f3a"/><stop offset=".45" stop-color="#55534d"/><stop offset="1" stop-color="#69675f"/></linearGradient>
<polygon points="1313.0,662.0 1424.0,574.7 1424.2,582.7 1311.7,671.2" fill="url(#lv19)" stroke="#15140f" stroke-width="0.8" stroke-linejoin="round" />
<linearGradient id="lv20" gradientUnits="userSpaceOnUse" x1="1369.5" y1="627.6" x2="1373.2" y2="632.4"><stop offset="0" stop-color="#3f3d38"/><stop offset=".45" stop-color="#55534d"/><stop offset="1" stop-color="#64625b"/></linearGradient>
<polygon points="1314.9,670.8 1424.2,584.5 1422.0,589.7 1314.0,676.4" fill="url(#lv20)" stroke="#15140f" stroke-width="0.8" stroke-linejoin="round" />
<polygon points="1311.7,671.2 1424.2,582.7 1424.2,584.5 1311.4,673.0" fill="#68665f" stroke="#15140f" stroke-width="0.8" stroke-linejoin="round" />
<polygon points="1312.0,662.6 1313.0,662.0 1312.6,670.8 1311.7,671.2 1311.4,673.0" fill="#68665f" stroke="#15140f" stroke-width="0.8" stroke-linejoin="round" />
<path d="M1423.0 575.1Q1426.6 572.9 1427.9 576.3L1426.8 584.1L1423.8 587.1L1422.4 584.9Z" fill="#4d4b45" stroke="#15140f" stroke-width="0.8" stroke-linejoin="round" stroke-linecap="round" />
<path d="M1423.8 574.9Q1426.6 573.3 1427.6 576.1L1425.0 577.7Z" fill="#726f67" stroke="#15140f" stroke-width="0.7" stroke-linejoin="round" stroke-linecap="round" />
<linearGradient id="lv21" gradientUnits="userSpaceOnUse" x1="1366.8" y1="634.0" x2="1371.6" y2="640.3"><stop offset="0" stop-color="#413f3a"/><stop offset=".45" stop-color="#55534d"/><stop offset="1" stop-color="#69675f"/></linearGradient>
<polygon points="1311.5,678.2 1422.0,589.7 1422.2,597.7 1310.2,687.4" fill="url(#lv21)" stroke="#15140f" stroke-width="0.8" stroke-linejoin="round" />
<linearGradient id="lv22" gradientUnits="userSpaceOnUse" x1="1367.8" y1="643.2" x2="1371.5" y2="648.0"><stop offset="0" stop-color="#3f3d38"/><stop offset=".45" stop-color="#55534d"/><stop offset="1" stop-color="#64625b"/></linearGradient>
<polygon points="1313.4,687.0 1422.2,599.5 1420.0,604.7 1312.5,692.6" fill="url(#lv22)" stroke="#15140f" stroke-width="0.8" stroke-linejoin="round" />
<polygon points="1310.2,687.4 1422.2,597.7 1422.2,599.5 1309.9,689.2" fill="#68665f" stroke="#15140f" stroke-width="0.8" stroke-linejoin="round" />
<polygon points="1310.5,678.8 1311.5,678.2 1311.1,687.0 1310.2,687.4 1309.9,689.2" fill="#68665f" stroke="#15140f" stroke-width="0.8" stroke-linejoin="round" />
<path d="M1421.0 590.1Q1424.6 587.9 1425.9 591.3L1424.8 599.1L1421.8 602.1L1420.4 599.9Z" fill="#4d4b45" stroke="#15140f" stroke-width="0.8" stroke-linejoin="round" stroke-linecap="round" />
<path d="M1421.8 589.9Q1424.6 588.3 1425.6 591.1L1423.0 592.7Z" fill="#726f67" stroke="#15140f" stroke-width="0.7" stroke-linejoin="round" stroke-linecap="round" />
<linearGradient id="lv23" gradientUnits="userSpaceOnUse" x1="1365.0" y1="649.5" x2="1369.9" y2="655.9"><stop offset="0" stop-color="#413f3a"/><stop offset=".45" stop-color="#55534d"/><stop offset="1" stop-color="#69675f"/></linearGradient>
<polygon points="1310.0,694.4 1420.0,604.7 1420.2,612.7 1308.7,703.6" fill="url(#lv23)" stroke="#15140f" stroke-width="0.8" stroke-linejoin="round" />
<linearGradient id="lv24" gradientUnits="userSpaceOnUse" x1="1366.0" y1="658.8" x2="1369.7" y2="663.6"><stop offset="0" stop-color="#3f3d38"/><stop offset=".45" stop-color="#55534d"/><stop offset="1" stop-color="#64625b"/></linearGradient>
<polygon points="1311.9,703.2 1420.2,614.5 1419.2,620.0 1314.4,707.9" fill="url(#lv24)" stroke="#15140f" stroke-width="0.8" stroke-linejoin="round" />
<polygon points="1308.7,703.6 1420.2,612.7 1420.2,614.5 1308.4,705.4" fill="#68665f" stroke="#15140f" stroke-width="0.8" stroke-linejoin="round" />
<polygon points="1309.0,695.0 1310.0,694.4 1309.6,703.2 1308.7,703.6 1308.4,705.4" fill="#68665f" stroke="#15140f" stroke-width="0.8" stroke-linejoin="round" />
<path d="M1419.0 605.1Q1422.6 602.9 1423.9 606.3L1422.8 614.1L1419.8 617.1L1418.4 614.9Z" fill="#4d4b45" stroke="#15140f" stroke-width="0.8" stroke-linejoin="round" stroke-linecap="round" />
<path d="M1419.8 604.9Q1422.6 603.3 1423.6 606.1L1421.0 607.7Z" fill="#726f67" stroke="#15140f" stroke-width="0.7" stroke-linejoin="round" stroke-linecap="round" />
<polygon points="935.0,238.5 1086.2,199.9 1090.0,198.4 1093.1,198.0 1100.6,198.7 1426.8,303.0 1436.8,309.3 1308.5,373.4 1296.1,369.0 1294.0,360.0 963.0,247.2" fill="#716e65" stroke="#15140f" stroke-width="1" stroke-linejoin="round" />
<polygon points="935.0,238.5 1086.2,199.9 1090.0,198.4 1093.1,198.0 1100.6,198.7 1101.8,203.0 963.6,246.9" fill="url(#gFilL)" stroke="#15140f" stroke-width="0.9" stroke-linejoin="round" />
<polygon points="963.0,247.2 1101.0,199.2 1109.7,199.2 972.5,249.6" fill="#4a4943" stroke="#15140f" stroke-width="0.8" stroke-linejoin="round" />
<polygon points="972.5,249.6 1109.7,199.2 1115.2,200.9 978.0,251.5" fill="#8a887e" stroke="#15140f" stroke-width="0.8" stroke-linejoin="round" />
<polygon points="1109.7,199.2 1110.9,198.2 1116.2,200.0 1115.2,200.9" fill="#6c6a62" stroke="#15140f" stroke-width="0.7" stroke-linejoin="round" />
<polygon points="1115.2,200.9 1116.2,200.0 1117.0,203.7 1115.8,203.9" fill="#403f3a" stroke="#15140f" stroke-width="0.7" stroke-linejoin="round" />
<polygon points="978.0,252.3 1115.8,203.9 1124.5,203.9 987.5,254.8" fill="#4a4943" stroke="#15140f" stroke-width="0.8" stroke-linejoin="round" />
<polygon points="987.5,254.8 1124.5,203.9 1129.9,205.6 993.1,256.7" fill="#8a887e" stroke="#15140f" stroke-width="0.8" stroke-linejoin="round" />
<polygon points="1124.5,203.9 1125.7,202.9 1130.9,204.7 1129.9,205.6" fill="#6c6a62" stroke="#15140f" stroke-width="0.7" stroke-linejoin="round" />
<polygon points="1129.9,205.6 1130.9,204.7 1131.7,208.4 1130.5,208.6" fill="#403f3a" stroke="#15140f" stroke-width="0.7" stroke-linejoin="round" />
<polygon points="993.1,257.5 1130.5,208.6 1139.3,208.5 1002.6,259.9" fill="#4a4943" stroke="#15140f" stroke-width="0.8" stroke-linejoin="round" />
<polygon points="1002.6,259.9 1139.3,208.5 1144.7,210.3 1008.1,261.8" fill="#8a887e" stroke="#15140f" stroke-width="0.8" stroke-linejoin="round" />
<polygon points="1139.3,208.5 1140.5,207.5 1145.7,209.4 1144.7,210.3" fill="#6c6a62" stroke="#15140f" stroke-width="0.7" stroke-linejoin="round" />
<polygon points="1144.7,210.3 1145.7,209.4 1146.5,213.1 1145.3,213.3" fill="#403f3a" stroke="#15140f" stroke-width="0.7" stroke-linejoin="round" />
<polygon points="1008.1,262.6 1145.3,213.3 1154.0,213.2 1017.6,265.1" fill="#4a4943" stroke="#15140f" stroke-width="0.8" stroke-linejoin="round" />
<polygon points="1017.6,265.1 1154.0,213.2 1159.5,215.0 1023.2,267.0" fill="#8a887e" stroke="#15140f" stroke-width="0.8" stroke-linejoin="round" />
<polygon points="1154.0,213.2 1155.2,212.2 1160.5,214.1 1159.5,215.0" fill="#6c6a62" stroke="#15140f" stroke-width="0.7" stroke-linejoin="round" />
<polygon points="1159.5,215.0 1160.5,214.1 1161.3,217.8 1160.1,218.0" fill="#403f3a" stroke="#15140f" stroke-width="0.7" stroke-linejoin="round" />
<polygon points="1023.2,267.8 1160.1,218.0 1168.8,217.9 1032.7,270.2" fill="#4a4943" stroke="#15140f" stroke-width="0.8" stroke-linejoin="round" />
<polygon points="1032.7,270.2 1168.8,217.9 1174.3,219.7 1038.2,272.1" fill="#8a887e" stroke="#15140f" stroke-width="0.8" stroke-linejoin="round" />
<polygon points="1168.8,217.9 1170.0,216.9 1175.3,218.8 1174.3,219.7" fill="#6c6a62" stroke="#15140f" stroke-width="0.7" stroke-linejoin="round" />
<polygon points="1174.3,219.7 1175.3,218.8 1176.1,222.5 1174.9,222.7" fill="#403f3a" stroke="#15140f" stroke-width="0.7" stroke-linejoin="round" />
<polygon points="1038.2,272.9 1174.9,222.7 1183.6,222.6 1047.7,275.3" fill="#4a4943" stroke="#15140f" stroke-width="0.8" stroke-linejoin="round" />
<polygon points="1047.7,275.3 1183.6,222.6 1189.0,224.4 1053.3,277.2" fill="#8a887e" stroke="#15140f" stroke-width="0.8" stroke-linejoin="round" />
<polygon points="1183.6,222.6 1184.8,221.6 1190.0,223.5 1189.0,224.4" fill="#6c6a62" stroke="#15140f" stroke-width="0.7" stroke-linejoin="round" />
<polygon points="1189.0,224.4 1190.0,223.5 1190.8,227.2 1189.6,227.4" fill="#403f3a" stroke="#15140f" stroke-width="0.7" stroke-linejoin="round" />
<polygon points="1053.3,278.0 1189.6,227.4 1198.3,227.3 1062.8,280.5" fill="#4a4943" stroke="#15140f" stroke-width="0.8" stroke-linejoin="round" />
<polygon points="1062.8,280.5 1198.3,227.3 1203.8,229.1 1068.3,282.4" fill="#8a887e" stroke="#15140f" stroke-width="0.8" stroke-linejoin="round" />
<polygon points="1198.3,227.3 1199.5,226.3 1204.8,228.2 1203.8,229.1" fill="#6c6a62" stroke="#15140f" stroke-width="0.7" stroke-linejoin="round" />
<polygon points="1203.8,229.1 1204.8,228.2 1205.6,231.9 1204.4,232.1" fill="#403f3a" stroke="#15140f" stroke-width="0.7" stroke-linejoin="round" />
<polygon points="1068.3,283.2 1204.4,232.1 1213.1,232.0 1077.8,285.6" fill="#4a4943" stroke="#15140f" stroke-width="0.8" stroke-linejoin="round" />
<polygon points="1077.8,285.6 1213.1,232.0 1218.6,233.8 1083.4,287.5" fill="#8a887e" stroke="#15140f" stroke-width="0.8" stroke-linejoin="round" />
<polygon points="1213.1,232.0 1214.3,231.0 1219.6,232.9 1218.6,233.8" fill="#6c6a62" stroke="#15140f" stroke-width="0.7" stroke-linejoin="round" />
<polygon points="1218.6,233.8 1219.6,232.9 1220.4,236.6 1219.2,236.8" fill="#403f3a" stroke="#15140f" stroke-width="0.7" stroke-linejoin="round" />
<polygon points="1083.4,288.3 1219.2,236.8 1227.9,236.7 1092.8,290.8" fill="#4a4943" stroke="#15140f" stroke-width="0.8" stroke-linejoin="round" />
<polygon points="1092.8,290.8 1227.9,236.7 1233.4,238.5 1098.4,292.7" fill="#8a887e" stroke="#15140f" stroke-width="0.8" stroke-linejoin="round" />
<polygon points="1227.9,236.7 1229.1,235.7 1234.4,237.6 1233.4,238.5" fill="#6c6a62" stroke="#15140f" stroke-width="0.7" stroke-linejoin="round" />
<polygon points="1233.4,238.5 1234.4,237.6 1235.2,241.3 1234.0,241.5" fill="#403f3a" stroke="#15140f" stroke-width="0.7" stroke-linejoin="round" />
<polygon points="1098.4,293.5 1234.0,241.5 1242.7,241.4 1107.9,295.9" fill="#4a4943" stroke="#15140f" stroke-width="0.8" stroke-linejoin="round" />
<polygon points="1107.9,295.9 1242.7,241.4 1248.1,243.2 1113.5,297.8" fill="#8a887e" stroke="#15140f" stroke-width="0.8" stroke-linejoin="round" />
<polygon points="1242.7,241.4 1243.9,240.4 1249.1,242.3 1248.1,243.2" fill="#6c6a62" stroke="#15140f" stroke-width="0.7" stroke-linejoin="round" />
<polygon points="1248.1,243.2 1249.1,242.3 1249.9,246.0 1248.7,246.2" fill="#403f3a" stroke="#15140f" stroke-width="0.7" stroke-linejoin="round" />
<polygon points="1113.5,298.6 1248.7,246.2 1257.4,246.1 1122.9,301.0" fill="#4a4943" stroke="#15140f" stroke-width="0.8" stroke-linejoin="round" />
<polygon points="1122.9,301.0 1257.4,246.1 1262.9,247.8 1128.5,302.9" fill="#8a887e" stroke="#15140f" stroke-width="0.8" stroke-linejoin="round" />
<polygon points="1257.4,246.1 1258.6,245.1 1263.9,246.9 1262.9,247.8" fill="#6c6a62" stroke="#15140f" stroke-width="0.7" stroke-linejoin="round" />
<polygon points="1262.9,247.8 1263.9,246.9 1264.7,250.7 1263.5,250.8" fill="#403f3a" stroke="#15140f" stroke-width="0.7" stroke-linejoin="round" />
<polygon points="1128.5,303.8 1263.5,250.8 1272.2,250.8 1138.0,306.2" fill="#4a4943" stroke="#15140f" stroke-width="0.8" stroke-linejoin="round" />
<polygon points="1138.0,306.2 1272.2,250.8 1277.7,252.5 1143.5,308.1" fill="#8a887e" stroke="#15140f" stroke-width="0.8" stroke-linejoin="round" />
<polygon points="1272.2,250.8 1273.4,249.8 1278.7,251.6 1277.7,252.5" fill="#6c6a62" stroke="#15140f" stroke-width="0.7" stroke-linejoin="round" />
<polygon points="1277.7,252.5 1278.7,251.6 1279.5,255.3 1278.3,255.5" fill="#403f3a" stroke="#15140f" stroke-width="0.7" stroke-linejoin="round" />
<polygon points="1143.5,308.9 1278.3,255.5 1287.0,255.5 1153.0,311.3" fill="#4a4943" stroke="#15140f" stroke-width="0.8" stroke-linejoin="round" />
<polygon points="1153.0,311.3 1287.0,255.5 1292.4,257.2 1158.6,313.2" fill="#8a887e" stroke="#15140f" stroke-width="0.8" stroke-linejoin="round" />
<polygon points="1287.0,255.5 1288.2,254.5 1293.4,256.3 1292.4,257.2" fill="#6c6a62" stroke="#15140f" stroke-width="0.7" stroke-linejoin="round" />
<polygon points="1292.4,257.2 1293.4,256.3 1294.2,260.0 1293.0,260.2" fill="#403f3a" stroke="#15140f" stroke-width="0.7" stroke-linejoin="round" />
<polygon points="1158.6,314.0 1293.0,260.2 1301.8,260.2 1168.1,316.5" fill="#4a4943" stroke="#15140f" stroke-width="0.8" stroke-linejoin="round" />
<polygon points="1168.1,316.5 1301.8,260.2 1307.2,261.9 1173.6,318.4" fill="#8a887e" stroke="#15140f" stroke-width="0.8" stroke-linejoin="round" />
<polygon points="1301.8,260.2 1303.0,259.2 1308.2,261.0 1307.2,261.9" fill="#6c6a62" stroke="#15140f" stroke-width="0.7" stroke-linejoin="round" />
<polygon points="1307.2,261.9 1308.2,261.0 1309.0,264.7 1307.8,264.9" fill="#403f3a" stroke="#15140f" stroke-width="0.7" stroke-linejoin="round" />
<polygon points="1173.6,319.2 1307.8,264.9 1316.5,264.9 1183.1,321.6" fill="#4a4943" stroke="#15140f" stroke-width="0.8" stroke-linejoin="round" />
<polygon points="1183.1,321.6 1316.5,264.9 1322.0,266.6 1188.7,323.5" fill="#8a887e" stroke="#15140f" stroke-width="0.8" stroke-linejoin="round" />
<polygon points="1316.5,264.9 1317.7,263.9 1323.0,265.7 1322.0,266.6" fill="#6c6a62" stroke="#15140f" stroke-width="0.7" stroke-linejoin="round" />
<polygon points="1322.0,266.6 1323.0,265.7 1323.8,269.4 1322.6,269.6" fill="#403f3a" stroke="#15140f" stroke-width="0.7" stroke-linejoin="round" />
<polygon points="1188.7,324.3 1322.6,269.6 1331.3,269.6 1198.2,326.8" fill="#4a4943" stroke="#15140f" stroke-width="0.8" stroke-linejoin="round" />
<polygon points="1198.2,326.8 1331.3,269.6 1336.8,271.3 1203.7,328.7" fill="#8a887e" stroke="#15140f" stroke-width="0.8" stroke-linejoin="round" />
<polygon points="1331.3,269.6 1332.5,268.6 1337.8,270.4 1336.8,271.3" fill="#6c6a62" stroke="#15140f" stroke-width="0.7" stroke-linejoin="round" />
<polygon points="1336.8,271.3 1337.8,270.4 1338.6,274.1 1337.4,274.3" fill="#403f3a" stroke="#15140f" stroke-width="0.7" stroke-linejoin="round" />
<polygon points="1203.7,329.5 1337.4,274.3 1346.1,274.3 1213.2,331.9" fill="#4a4943" stroke="#15140f" stroke-width="0.8" stroke-linejoin="round" />
<polygon points="1213.2,331.9 1346.1,274.3 1351.5,276.0 1218.8,333.8" fill="#8a887e" stroke="#15140f" stroke-width="0.8" stroke-linejoin="round" />
<polygon points="1346.1,274.3 1347.3,273.3 1352.5,275.1 1351.5,276.0" fill="#6c6a62" stroke="#15140f" stroke-width="0.7" stroke-linejoin="round" />
<polygon points="1351.5,276.0 1352.5,275.1 1353.3,278.8 1352.1,279.0" fill="#403f3a" stroke="#15140f" stroke-width="0.7" stroke-linejoin="round" />
<polygon points="1218.8,334.6 1352.1,279.0 1360.8,279.0 1228.3,337.0" fill="#4a4943" stroke="#15140f" stroke-width="0.8" stroke-linejoin="round" />
<polygon points="1228.3,337.0 1360.8,279.0 1366.3,280.7 1233.8,338.9" fill="#8a887e" stroke="#15140f" stroke-width="0.8" stroke-linejoin="round" />
<polygon points="1360.8,279.0 1362.0,278.0 1367.3,279.8 1366.3,280.7" fill="#6c6a62" stroke="#15140f" stroke-width="0.7" stroke-linejoin="round" />
<polygon points="1366.3,280.7 1367.3,279.8 1368.1,283.5 1366.9,283.7" fill="#403f3a" stroke="#15140f" stroke-width="0.7" stroke-linejoin="round" />
<polygon points="1233.8,339.7 1366.9,283.7 1375.6,283.7 1243.3,342.2" fill="#4a4943" stroke="#15140f" stroke-width="0.8" stroke-linejoin="round" />
<polygon points="1243.3,342.2 1375.6,283.7 1381.1,285.4 1248.9,344.1" fill="#8a887e" stroke="#15140f" stroke-width="0.8" stroke-linejoin="round" />
<polygon points="1375.6,283.7 1376.8,282.7 1382.1,284.5 1381.1,285.4" fill="#6c6a62" stroke="#15140f" stroke-width="0.7" stroke-linejoin="round" />
<polygon points="1381.1,285.4 1382.1,284.5 1382.9,288.2 1381.7,288.4" fill="#403f3a" stroke="#15140f" stroke-width="0.7" stroke-linejoin="round" />
<polygon points="1248.9,344.9 1381.7,288.4 1390.4,288.4 1258.3,347.3" fill="#4a4943" stroke="#15140f" stroke-width="0.8" stroke-linejoin="round" />
<polygon points="1258.3,347.3 1390.4,288.4 1395.9,290.1 1263.9,349.2" fill="#8a887e" stroke="#15140f" stroke-width="0.8" stroke-linejoin="round" />
<polygon points="1390.4,288.4 1391.6,287.4 1396.9,289.2 1395.9,290.1" fill="#6c6a62" stroke="#15140f" stroke-width="0.7" stroke-linejoin="round" />
<polygon points="1395.9,290.1 1396.9,289.2 1397.7,292.9 1396.5,293.1" fill="#403f3a" stroke="#15140f" stroke-width="0.7" stroke-linejoin="round" />
<polygon points="1263.9,350.0 1396.5,293.1 1405.2,293.1 1273.4,352.5" fill="#4a4943" stroke="#15140f" stroke-width="0.8" stroke-linejoin="round" />
<polygon points="1273.4,352.5 1405.2,293.1 1410.6,294.8 1279.0,354.4" fill="#8a887e" stroke="#15140f" stroke-width="0.8" stroke-linejoin="round" />
<polygon points="1405.2,293.1 1406.4,292.1 1411.6,293.9 1410.6,294.8" fill="#6c6a62" stroke="#15140f" stroke-width="0.7" stroke-linejoin="round" />
<polygon points="1410.6,294.8 1411.6,293.9 1412.4,297.6 1411.2,297.8" fill="#403f3a" stroke="#15140f" stroke-width="0.7" stroke-linejoin="round" />
<polygon points="1279.0,355.2 1411.2,297.8 1419.9,297.8 1288.4,357.6" fill="#4a4943" stroke="#15140f" stroke-width="0.8" stroke-linejoin="round" />
<polygon points="1288.4,357.6 1419.9,297.8 1425.4,299.5 1294.0,359.5" fill="#8a887e" stroke="#15140f" stroke-width="0.8" stroke-linejoin="round" />
<polygon points="1419.9,297.8 1421.1,296.8 1426.4,298.6 1425.4,299.5" fill="#6c6a62" stroke="#15140f" stroke-width="0.7" stroke-linejoin="round" />
<polygon points="1425.4,299.5 1426.4,298.6 1427.2,302.3 1426.0,302.5" fill="#403f3a" stroke="#15140f" stroke-width="0.7" stroke-linejoin="round" />
<polygon points="1426.8,303.0 1436.0,304.8 1443.0,308.0 1450.0,313.5 1454.2,319.8 1457.0,326.0 1457.9,332.3 1457.0,345.0 1455.4,354.7 1452.9,363.4 1451.7,338.5 1436.8,309.3" fill="#6b6962" stroke="#15140f" stroke-width="1" stroke-linejoin="round" />
<polygon points="1307.2,373.6 1436.8,309.3 1451.6,337.5 1318.4,409.1 1319.6,400.0 1317.5,392.0 1313.5,384.0 1309.7,378.6" fill="url(#gFilR)" stroke="#15140f" stroke-width="1" stroke-linejoin="round" />
<polyline points="1297.3,367.1 1426.8,303.7" fill="none" stroke="#15140f" stroke-width="0.9" stroke-linejoin="round" stroke-linecap="round" />
<polygon points="835.7,239.8 866.8,226.2 875.5,223.7 879.2,223.4 935.0,238.6 963.0,247.2 1294.0,360.0 1296.1,369.0 1260.3,392.0 1060.0,321.9 935.0,275.3 835.7,239.8" fill="#706d64" stroke="#15140f" stroke-width="1" stroke-linejoin="round" />
<polygon points="1259.9,391.0 1296.0,369.3 1303.5,373.0 1309.7,378.6 1313.5,384.0 1315.9,389.8 1317.8,399.8 1317.0,402.2 1278.5,422.8 1277.9,414.7 1275.8,408.0 1272.3,402.2 1266.5,396.0" fill="url(#gFil)" stroke="#15140f" stroke-width="1" stroke-linejoin="round" />
<polygon points="1278.5,422.8 1317.0,402.2 1317.1,409.7 1309.7,470.0 1282.3,770.0 1279.3,803.5 1278.0,813.4 1274.3,815.9 1244.4,838.3 1277.3,470.0" fill="#5d5a53" stroke="#15140f" stroke-width="1" stroke-linejoin="round" />
<polyline points="1317.5,392.0 1319.6,400.0 1319.4,410.0 1312.2,470.0 1307.9,530.0 1296.0,640.0 1284.8,770.0" fill="none" stroke="#15140f" stroke-width="0.9" stroke-linejoin="round" stroke-linecap="round" />
<polyline points="1271.5,510.4 1307.6,488.6" fill="none" stroke="#15140f" stroke-width="0.9" stroke-linejoin="round" stroke-linecap="round" />
<polyline points="1250.0,771.7 1283.6,748.7" fill="none" stroke="#15140f" stroke-width="0.9" stroke-linejoin="round" stroke-linecap="round" />
<polygon points="721.1,287.8 835.7,239.8 935.0,275.3 1060.0,321.9 1260.3,392.0 1148.1,454.8 1135.9,450.8 1123.8,446.7 1111.7,442.7 1099.5,438.7 1087.3,434.6 1075.0,430.5 1062.4,426.3 1049.6,422.0 1036.7,417.6 1024.0,413.3 1011.7,409.1 1000.0,405.0 989.1,401.1 978.9,397.4 969.1,393.8 959.4,390.2 949.8,386.6 940.0,382.8 929.9,378.9 919.8,375.0 909.7,370.9 899.7,366.9 889.7,362.9 880.0,359.0 870.5,355.2 861.3,351.4 852.2,347.7 843.2,343.9 833.9,340.1 824.5,336.1 814.6,331.9 804.3,327.5 793.9,323.0 783.6,318.5 773.8,314.2 764.7,310.0 756.5,306.1 749.0,302.3 741.9,298.7 735.0,295.1 728.2,291.5 721.1,287.8" fill="url(#gTop)" stroke="#15140f" stroke-width="1" stroke-linejoin="round" />
<polygon points="713.7,287.1 826.9,239.8 866.8,223.0 873.0,221.8 879.2,223.4 875.5,223.7 835.7,239.8 721.1,287.8" fill="#a3a197" stroke="#15140f" stroke-width="0.9" stroke-linejoin="round" />
<polygon points="1148.1,454.8 1259.9,391.0 1266.5,396.0 1272.3,402.2 1275.8,408.0 1277.9,414.7 1278.5,422.8 1168.7,488.4 1168.0,479.7 1166.0,472.0 1161.8,464.7 1156.0,458.5" fill="url(#gFil)" stroke="#15140f" stroke-width="1" stroke-linejoin="round" />
<polygon points="1168.7,488.4 1278.5,422.8 1277.3,470.0 1244.4,838.3 1240.7,845.2 1145.6,915.0 1144.4,913.3 1144.5,906.3 1144.7,899.5 1144.8,892.7 1144.9,885.7 1145.0,878.2 1145.2,870.0 1145.4,861.1 1145.5,851.6 1145.7,841.7 1145.9,831.4 1146.1,820.8 1146.3,810.0 1146.5,798.6 1146.7,786.3 1147.0,773.8 1147.2,761.5 1147.5,750.0 1147.9,740.0 1148.3,731.7 1148.8,724.8 1149.3,718.8 1149.8,713.0 1150.4,706.9 1151.0,700.0 1151.7,692.4 1152.4,684.4 1153.1,676.2 1153.9,667.8 1154.7,659.0 1155.5,650.0 1156.3,640.6 1157.1,630.7 1158.0,620.6 1158.8,610.4 1159.7,600.1 1160.5,590.0 1161.3,580.0 1162.2,570.0 1163.0,560.0 1163.9,550.0 1164.7,540.0 1165.6,530.0" fill="url(#gSide)" stroke="#15140f" stroke-width="1" stroke-linejoin="round" />
<polygon points="721.1,287.8 728.2,291.5 735.0,295.1 741.9,298.7 749.0,302.3 756.5,306.1 764.7,310.0 773.8,314.2 783.6,318.5 793.9,323.0 804.3,327.5 814.6,331.9 824.5,336.1 833.9,340.1 843.2,343.9 852.2,347.7 861.3,351.4 870.5,355.2 880.0,359.0 889.7,362.9 899.7,366.9 909.7,370.9 919.8,375.0 929.9,378.9 940.0,382.8 949.8,386.6 959.4,390.2 969.1,393.8 978.9,397.4 989.1,401.1 1000.0,405.0 1011.7,409.1 1024.0,413.3 1036.7,417.6 1049.6,422.0 1062.4,426.3 1075.0,430.5 1087.3,434.6 1099.5,438.7 1111.7,442.7 1123.8,446.7 1135.9,450.8 1148.1,454.8 1156.0,458.5 1161.8,464.7 1166.0,472.0 1168.0,479.7 1168.7,488.4 1165.6,530.0 1164.7,540.0 1163.9,550.0 1163.0,560.0 1162.2,570.0 1161.3,580.0 1160.5,590.0 1159.7,600.1 1158.8,610.4 1158.0,620.6 1157.1,630.7 1156.3,640.6 1155.5,650.0 1154.7,659.0 1153.9,667.8 1153.1,676.2 1152.4,684.4 1151.7,692.4 1151.0,700.0 1150.4,706.9 1149.8,713.0 1149.3,718.8 1148.8,724.8 1148.3,731.7 1147.9,740.0 1147.5,750.0 1147.2,761.5 1147.0,773.8 1146.7,786.3 1146.5,798.6 1146.3,810.0 1146.1,820.8 1145.9,831.4 1145.7,841.7 1145.5,851.6 1145.4,861.1 1145.2,870.0 1145.0,878.2 1144.9,885.7 1144.8,892.7 1144.7,899.5 1144.5,906.3 1144.4,913.3 1144.2,917.0 1143.0,921.0 1140.7,923.9 1137.5,925.0 1134.4,925.1 1124.5,921.4 1117.9,918.5 1111.2,915.7 1104.6,912.9 1098.0,910.1 1091.3,907.1 1084.6,904.0 1078.3,900.9 1072.4,897.9 1066.5,894.8 1060.1,891.4 1052.7,887.6 1044.0,883.2 1033.5,878.1 1021.7,872.3 1008.8,866.2 995.5,859.8 982.2,853.4 969.4,847.1 956.9,841.0 944.3,834.8 931.7,828.7 919.2,822.5 906.8,816.2 894.7,809.8 882.7,803.3 870.7,796.6 858.9,789.9 847.3,783.1 836.2,776.5 825.7,770.0 815.4,763.4 805.2,756.5 795.4,749.7 786.4,743.4 778.5,737.8 772.2,733.4 767.8,730.4 765.0,728.5 763.4,727.4 762.4,726.7 761.4,726.0 760.0,725.0 758.2,723.6 756.3,722.3 754.6,721.0 752.9,719.7 751.3,718.4 749.8,717.2 748.4,716.1 747.1,715.0 745.8,714.0 744.7,713.0 743.6,712.0 742.5,711.0 741.5,710.0 740.6,709.0 739.7,707.9 738.9,706.9 738.1,705.8 737.3,704.7 736.6,703.5 735.9,702.2 735.2,700.9 734.6,699.6 734.0,698.3 733.5,697.0 733.0,695.9 732.7,695.1 732.3,694.3 732.0,693.3 731.6,691.9 731.1,689.8 730.5,687.0 729.8,683.6 729.0,679.9 728.3,675.8 727.5,671.6 726.8,667.4 726.1,663.1 725.5,658.6 724.9,654.0 724.2,649.3 723.6,644.6 723.0,640.0 722.0,630.0 721.0,620.0 719.9,610.0 718.9,600.0 717.9,590.0 717.0,580.0 716.1,570.2 715.2,560.7 714.4,551.2 713.6,541.5 712.8,531.2 712.0,520.0 711.3,507.4 710.5,493.3 709.8,478.8 709.1,464.4 708.5,451.2 708.0,440.0 707.5,431.4 707.1,424.8 706.8,419.4 706.5,414.1 706.3,407.9 706.0,400.0 705.8,389.6 705.6,377.3 705.4,364.2 705.2,351.3 705.1,339.6 705.0,330.0 704.9,322.9 704.9,317.6 704.9,313.4 705.0,309.8 705.0,306.3 705.0,302.1 705.6,296.5 707.4,292.1 710.0,289.0 713.7,287.1 717.5,286.9" fill="url(#gFF)" stroke="#15140f" stroke-width="1.1" stroke-linejoin="round" />
<defs>
<linearGradient id="gHi" gradientUnits="userSpaceOnUse" x1="900" y1="735" x2="896" y2="743"><stop offset="0" stop-color="#77756c"/><stop offset=".5" stop-color="#a19f93"/><stop offset="1" stop-color="#75736b"/></linearGradient>
</defs>
<polygon points="744.6,642.4 743.7,635.8 742.9,629.7 742.0,623.6 741.2,616.9 740.3,609.2 739.5,600.0 738.7,588.8 737.9,576.1 737.2,562.4 736.4,548.1 735.7,533.8 735.0,520.0 734.3,506.9 733.6,494.0 732.9,481.1 732.3,468.0 731.7,454.4 731.1,440.0 730.6,424.8 730.2,408.8 729.8,392.3 729.4,375.6 729.0,358.9 728.6,342.4 729.3,339.0 731.0,336.6 734.0,335.3 739.8,336.1 824.0,373.0 844.0,381.7 864.7,390.7 885.5,399.8 905.5,408.5 923.9,416.4 940.0,423.3 952.7,428.7 962.4,432.7 970.6,436.0 978.6,439.2 987.9,442.8 1000.0,447.3 1015.1,452.9 1032.2,459.1 1050.6,465.7 1069.7,472.5 1088.7,479.3 1107.1,485.9 1113.5,489.0 1118.3,494.6 1121.0,499.5 1121.4,504.6 1118.9,530.0 1117.9,546.7 1116.9,563.3 1115.9,580.0 1115.0,596.7 1114.0,613.3 1113.0,630.0 1112.0,646.7 1110.9,663.3 1109.9,680.0 1108.9,696.7 1108.0,713.4 1107.2,730.0 1106.6,746.6 1106.1,763.2 1105.7,779.8 1105.4,796.4 1105.1,813.0 1104.7,829.6 1104.0,833.5 1101.5,836.6 1097.5,837.6 1040.0,813.7 1030.0,809.0 1020.0,804.3 1010.0,799.6 1000.0,794.9 990.0,790.1 980.0,785.2 970.0,780.2 960.0,775.2 950.0,770.2 940.0,765.0 930.0,759.8 920.0,754.6 910.0,749.3 900.0,744.0 890.0,738.6 880.0,733.2 870.0,727.7 860.0,722.1 849.7,716.3 839.0,710.2 828.4,704.1 818.1,698.2 808.5,692.5 800.0,687.5 792.6,683.0 785.9,678.8 780.0,674.9 774.7,671.5 770.1,668.4 766.0,665.8 762.8,663.7 760.5,662.3 758.8,661.2 757.4,660.3 756.1,659.5 754.4,658.4 749.5,654.5 747.0,650.5 745.3,646.5" fill="none" stroke="#15140f" stroke-width="1" stroke-linejoin="round" />
<polygon points="728.6,342.4 731.1,440.0 735.0,520.0 739.5,600.0 744.6,642.4 747.5,651.5 754.4,658.4 757.8,657.3 753.0,645.0 751.5,600.0 746.8,520.0 742.5,440.0 738.6,346.0 737.0,340.5 733.5,338.5 730.3,339.5" fill="#57564f" stroke="#15140f" stroke-width="0.9" stroke-linejoin="round" />
<polyline points="733.0,338.6 734.2,345.0 737.5,440.0 741.6,520.0 746.0,600.0 749.5,646.0" fill="none" stroke="#2a2924" stroke-width="0.8" stroke-linejoin="round" stroke-linecap="round" />
<polygon points="760.0,643.5 766.4,647.2 772.6,650.8 778.8,654.4 785.2,658.1 792.2,662.2 800.0,666.8 808.8,672.0 818.5,677.8 828.8,683.9 839.3,690.2 849.8,696.3 860.0,702.1 870.0,707.6 880.0,712.9 890.0,718.1 900.0,723.3 910.0,728.3 920.0,733.4 930.0,738.4 940.0,743.4 950.0,748.3 960.0,753.1 970.0,757.9 980.0,762.7 990.1,767.5 1000.2,772.2 1010.3,776.9 1020.4,781.5 1030.3,786.1 1040.0,790.6 1049.5,795.0 1058.8,799.2 1067.9,803.4 1077.0,807.6 1086.1,811.7 1095.2,815.9 1104.7,829.6 1101.5,836.6 1097.5,837.6 1040.0,813.7 1030.0,809.0 1020.0,804.3 1010.0,799.6 1000.0,794.9 990.0,790.1 980.0,785.2 970.0,780.2 960.0,775.2 950.0,770.2 940.0,765.0 930.0,759.8 920.0,754.6 910.0,749.3 900.0,744.0 890.0,738.6 880.0,733.2 870.0,727.7 860.0,722.1 849.7,716.3 839.0,710.2 828.4,704.1 818.1,698.2 808.5,692.5 800.0,687.5 792.6,683.0 785.9,678.8 780.0,674.9 774.7,671.5 770.1,668.4 766.0,665.8 762.8,663.7 760.5,662.3 758.8,661.2 757.4,660.3 756.1,659.5 754.4,658.4 749.5,654.5 753.0,645.0" fill="#696761" stroke="none" stroke-width="1" stroke-linejoin="round" />
<polygon points="757.0,652.0 764.0,656.3 770.7,660.5 777.4,664.8 784.4,669.1 791.8,673.6 800.0,678.5 809.0,683.8 818.7,689.5 828.9,695.5 839.4,701.5 849.8,707.4 860.0,713.0 870.0,718.3 880.0,723.5 890.0,728.6 900.0,733.6 910.0,738.6 920.0,743.7 930.0,748.8 940.0,754.0 950.0,759.2 960.0,764.4 970.0,769.5 980.0,774.5 990.1,779.5 1000.2,784.4 1010.3,789.3 1020.4,794.1 1030.3,798.8 1040.0,803.5 1049.5,808.0 1058.7,812.5 1067.8,816.8 1076.9,821.1 1085.9,825.4 1095.0,829.8 1095.5,834.2 1086.3,830.4 1077.2,826.6 1068.0,822.8 1058.8,819.0 1049.5,815.0 1040.0,810.8 1030.3,806.4 1020.3,801.8 1010.3,797.1 1000.2,792.3 990.1,787.4 980.0,782.5 970.0,777.6 960.0,772.7 950.0,767.7 940.0,762.7 930.0,757.5 920.0,752.3 910.0,747.0 900.0,741.6 890.0,736.0 880.0,730.5 870.0,724.9 860.0,719.2 849.8,713.4 839.3,707.4 828.9,701.3 818.7,695.3 809.0,689.6 800.0,684.2 791.9,679.2 784.6,674.6 777.8,670.2 771.2,666.0 764.6,661.7 757.8,657.3" fill="url(#gHi)" stroke="none" stroke-width="1" stroke-linejoin="round" />
<polygon points="767.0,640.1 772.2,642.8 777.0,645.2 781.8,647.7 787.0,650.4 792.9,653.4 800.0,657.0 808.2,661.1 817.2,665.7 826.9,670.5 837.4,675.8 848.4,681.3 860.0,687.2 872.4,693.5 885.9,700.4 899.9,707.5 914.1,714.8 928.3,722.0 942.0,729.0 955.3,735.7 968.4,742.3 981.5,748.9 994.4,755.4 1007.2,762.0 1020.0,768.5 1032.6,775.1 1045.1,781.6 1057.6,788.2 1069.9,794.7 1082.3,801.3 1094.7,807.8 1095.2,815.9 1086.1,811.7 1077.0,807.6 1067.9,803.4 1058.8,799.2 1049.5,795.0 1040.0,790.6 1030.3,786.1 1020.4,781.5 1010.3,776.9 1000.2,772.2 990.1,767.5 980.0,762.7 970.0,757.9 960.0,753.1 950.0,748.3 940.0,743.4 930.0,738.4 920.0,733.4 910.0,728.3 900.0,723.3 890.0,718.1 880.0,712.9 870.0,707.6 860.0,702.1 849.8,696.3 839.3,690.2 828.8,683.9 818.5,677.8 808.8,672.0 800.0,666.8 792.2,662.2 785.2,658.1 778.8,654.4 772.6,650.8 766.4,647.2 760.0,643.5" fill="#5c5a51" stroke="none" stroke-width="1" stroke-linejoin="round" />
<polyline points="760.0,643.5 766.4,647.2 772.6,650.8 778.8,654.4 785.2,658.1 792.2,662.2 800.0,666.8 808.8,672.0 818.5,677.8 828.8,683.9 839.3,690.2 849.8,696.3 860.0,702.1 870.0,707.6 880.0,712.9 890.0,718.1 900.0,723.3 910.0,728.3 920.0,733.4 930.0,738.4 940.0,743.4 950.0,748.3 960.0,753.1 970.0,757.9 980.0,762.7 990.1,767.5 1000.2,772.2 1010.3,776.9 1020.4,781.5 1030.3,786.1 1040.0,790.6 1049.5,795.0 1058.8,799.2 1067.9,803.4 1077.0,807.6 1086.1,811.7 1095.2,815.9" fill="none" stroke="#15140f" stroke-width="0.9" stroke-linejoin="round" stroke-linecap="round" />
<polyline points="757.0,652.0 764.0,656.3 770.7,660.5 777.4,664.8 784.4,669.1 791.8,673.6 800.0,678.5 809.0,683.8 818.7,689.5 828.9,695.5 839.4,701.5 849.8,707.4 860.0,713.0 870.0,718.3 880.0,723.5 890.0,728.6 900.0,733.6 910.0,738.6 920.0,743.7 930.0,748.8 940.0,754.0 950.0,759.2 960.0,764.4 970.0,769.5 980.0,774.5 990.1,779.5 1000.2,784.4 1010.3,789.3 1020.4,794.1 1030.3,798.8 1040.0,803.5 1049.5,808.0 1058.7,812.5 1067.8,816.8 1076.9,821.1 1085.9,825.4 1095.0,829.8" fill="none" stroke="#15140f" stroke-width="0.9" stroke-linejoin="round" stroke-linecap="round" />
<polyline points="757.8,657.3 764.6,661.7 771.2,666.0 777.8,670.2 784.6,674.6 791.9,679.2 800.0,684.2 809.0,689.6 818.7,695.3 828.9,701.3 839.3,707.4 849.8,713.4 860.0,719.2 870.0,724.9 880.0,730.5 890.0,736.0 900.0,741.6 910.0,747.0 920.0,752.3 930.0,757.5 940.0,762.7 950.0,767.7 960.0,772.7 970.0,777.6 980.0,782.5 990.1,787.4 1000.2,792.3 1010.3,797.1 1020.3,801.8 1030.3,806.4 1040.0,810.8 1049.5,815.0 1058.8,819.0 1068.0,822.8 1077.2,826.6 1086.3,830.4 1095.5,834.2" fill="none" stroke="#15140f" stroke-width="0.9" stroke-linejoin="round" stroke-linecap="round" />
<polyline points="754.4,658.4 756.1,659.5 757.4,660.3 758.8,661.2 760.5,662.3 762.8,663.7 766.0,665.8 770.1,668.4 774.7,671.5 780.0,674.9 785.9,678.8 792.6,683.0 800.0,687.5 808.5,692.5 818.1,698.2 828.4,704.1 839.0,710.2 849.7,716.3 860.0,722.1 870.0,727.7 880.0,733.2 890.0,738.6 900.0,744.0 910.0,749.3 920.0,754.6 930.0,759.8 940.0,765.0 950.0,770.2 960.0,775.2 970.0,780.2 980.0,785.2 990.0,790.1 1000.0,794.9 1010.0,799.6 1020.0,804.3 1030.0,809.0 1040.0,813.7 1097.5,837.6" fill="none" stroke="#15140f" stroke-width="1" stroke-linejoin="round" stroke-linecap="round" />
<polygon points="751.7,352.5 763.2,357.8 774.2,362.9 785.1,367.9 796.7,373.2 809.4,379.0 824.0,385.5 841.5,393.2 861.5,401.9 882.8,411.2 903.9,420.3 923.4,428.6 940.0,435.7 952.7,441.0 962.3,445.1 970.4,448.4 978.4,451.6 987.7,455.2 1000.0,459.8 1015.5,465.5 1033.0,471.9 1052.0,478.7 1071.6,485.8 1091.3,492.8 1110.2,499.6 1108.3,530.0 1107.3,546.7 1106.4,563.3 1105.4,580.0 1104.5,596.7 1103.5,613.3 1102.6,630.0 1101.6,646.9 1100.7,664.2 1099.7,681.4 1098.8,698.3 1097.9,714.6 1097.2,730.0 1096.6,744.3 1096.2,757.6 1095.8,770.3 1095.4,782.7 1095.1,795.1 1094.7,807.8 1020.0,768.5 1007.0,761.9 994.1,755.4 981.2,748.9 968.3,742.3 955.2,735.7 942.0,729.0 928.3,722.0 914.1,714.8 899.9,707.5 885.9,700.4 872.4,693.5 860.0,687.2 848.4,681.3 837.4,675.8 826.9,670.5 817.2,665.7 808.2,661.1 800.0,657.0 792.9,653.4 787.0,650.4 781.8,647.7 777.0,645.2 772.2,642.8 767.0,640.1 765.2,600.0 761.0,520.0 757.9,440.0" fill="url(#gScr)" stroke="#15140f" stroke-width="1" stroke-linejoin="round" />
<polygon points="746.7,349.8 751.7,352.5 757.9,440.0 761.0,520.0 765.2,600.0 767.0,640.1 760.0,643.5 757.5,600.0 752.8,520.0 749.3,440.0" fill="#4e4d47" stroke="#15140f" stroke-width="0.9" stroke-linejoin="round" />
<polyline points="751.9,353.5 757.9,440.0 761.0,520.0 765.2,600.0 767.0,640.0" fill="none" stroke="#9a988e" stroke-width="0.8" stroke-linejoin="round" stroke-linecap="round" />
<polyline points="772.8,733.4 766.6,686.0 767.2,683.4 769.5,683.6 860.0,736.4 958.5,790.0 1041.8,829.6" fill="none" stroke="#15140f" stroke-width="0.9" stroke-linejoin="round" stroke-linecap="round" />
<polygon points="744.8,685.8 762.2,696.6 765.4,712.8 747.3,701.6" fill="none" stroke="#15140f" stroke-width="0.9" stroke-linejoin="round" />
<path d="M1041.7 830.5L1072 842.3Q1080.5 846 1081.5 855L1084.6 904.6" fill="none" stroke="#15140f" stroke-width="0.9" stroke-linejoin="round" stroke-linecap="round" />
<polyline points="1041.7,830.5 1044.8,885.9" fill="none" stroke="#15140f" stroke-width="0.9" stroke-linejoin="round" stroke-linecap="round" />
<ellipse cx="1055.4" cy="850.8" rx="2.0" ry="2.4" fill="#5a5851" stroke="#15140f" stroke-width=".8" transform="rotate(-25 1055.4 850.8)"/>
<ellipse cx="1069.3" cy="857.3" rx="2.0" ry="2.4" fill="#5a5851" stroke="#15140f" stroke-width=".8" transform="rotate(-25 1069.3 857.3)"/>
<ellipse cx="1055.8" cy="864.1" rx="2.0" ry="2.4" fill="#5a5851" stroke="#15140f" stroke-width=".8" transform="rotate(-25 1055.8 864.1)"/>
<ellipse cx="1069.7" cy="870.6" rx="2.0" ry="2.4" fill="#5a5851" stroke="#15140f" stroke-width=".8" transform="rotate(-25 1069.7 870.6)"/>
<ellipse cx="1056.4" cy="877.2" rx="2.0" ry="2.4" fill="#5a5851" stroke="#15140f" stroke-width=".8" transform="rotate(-25 1056.4 877.2)"/>
<ellipse cx="1070.3" cy="883.8" rx="2.0" ry="2.4" fill="#5a5851" stroke="#15140f" stroke-width=".8" transform="rotate(-25 1070.3 883.8)"/>
<g transform="translate(1108.3 887.1) rotate(29)"><ellipse rx="18" ry="8.4" fill="#8d8b82" stroke="#15140f" stroke-width="1"/><ellipse cx="0.3" cy="0.4" rx="15.8" ry="6.6" fill="#33322d" stroke="#15140f" stroke-width=".8"/><path d="M-15.5 1.5 Q-15 -4 -10 -5.6 L-9.5 5.8 Q-14 5 -15.5 1.5z" fill="#9c9a90"/><path d="M15.8 0 Q15.5 4.5 10.5 5.8 L10 -5.6 Q14.5 -4.5 15.8 0z" fill="#b4b2a7"/><ellipse cx="-5.6" cy="0.2" rx="4.6" ry="6.4" fill="#4b4944" stroke="#15140f" stroke-width=".8"/><ellipse cx="6.6" cy="0.2" rx="4.6" ry="6.4" fill="#66645d" stroke="#15140f" stroke-width=".8"/><path d="M-7.6 -5.8 Q-4.4 0 -7.6 6.2 M4.6 -5.8 Q7.8 0 4.6 6.2" stroke="#15140f" stroke-width=".8" fill="none"/><path d="M-9.3 -5.2 Q-7 0 -9.3 5.6" stroke="#77756d" stroke-width="1.3" fill="none"/><path d="M3 -5.4 Q5.2 0 3 5.8" stroke="#8a887f" stroke-width="1.3" fill="none"/></g>
<g id="vc">
<defs><radialGradient id="vcs" cx=".5" cy=".5" r=".5"><stop offset="0" stop-color="#000" stop-opacity=".15"/><stop offset="1" stop-color="#000" stop-opacity="0"/></radialGradient>
<linearGradient id="vcl" x1="0" y1="0" x2="1" y2="1"><stop offset="0" stop-color="#f1f2f3"/><stop offset="1" stop-color="#dfe1e3"/></linearGradient>
<linearGradient id="vcr" x1="0" y1="0" x2="0" y2="1"><stop offset="0" stop-color="#eeeff0"/><stop offset="1" stop-color="#d8dadd"/></linearGradient></defs>
<ellipse cx="1862" cy="242" rx="34" ry="17" fill="url(#vcs)"/>
<path d="M1855 162.300V169.500" stroke="#7575f0" stroke-width="1.500"/>
<path d="M1819.700 227.500l5.600-3.100" stroke="#f06a6a" stroke-width="1.300"/><path d="M1888 221.900l6.200 3.100" stroke="#7ce87c" stroke-width="1.300"/>
<path d="M1855.100 169.200L1891.700 181.600L1858.200 200.200L1821.300 182.800z" fill="#f3f3f4"/>
<path d="M1821.300 182.800L1858.200 200.200L1858.200 243L1824.700 223.100z" fill="url(#vcl)"/>
<path d="M1858.200 200.200L1891.700 181.600L1887.300 221.300L1858.200 243z" fill="url(#vcr)"/>
<path d="M1855.100 169.200L1891.700 181.600L1858.200 200.200L1821.300 182.800zM1821.300 182.800L1824.700 223.100L1858.200 243L1887.300 221.300L1891.700 181.600M1858.200 200.200V243" fill="none" stroke="#8e9296" stroke-width=".9" stroke-dasharray="5 1.500"/>
<path d="M1852 195l6.200-3.500 6.200 3.500v7l-6.200 3.500-6.200-3.500z" fill="#e6e8ec" opacity=".8"/>
<text transform="matrix(-1 .4 -.97 -.46 1853.800 182.300)" font-family="IPAGothic, sans-serif" font-size="17" fill="#8a9096" text-anchor="middle" dominant-baseline="central">上</text>
<text transform="matrix(.93 .45 .06 1 1839.500 214)" font-family="IPAGothic, sans-serif" font-size="21" fill="#8a9096" text-anchor="middle" dominant-baseline="central">右</text>
<text transform="matrix(.86 -.5 -.1 1 1875 213.500)" font-family="IPAGothic, sans-serif" font-size="21.500" fill="#8a9096" text-anchor="middle" dominant-baseline="central">後</text>
<text x="1854.400" y="160.300" font-family="Liberation Sans, sans-serif" font-size="13.500" fill="#7b7bf5" text-anchor="middle" transform="translate(1854.400 0) scale(.8 1) translate(-1854.400 0)">Z</text>
<text x="1813.100" y="235" font-family="Liberation Sans, sans-serif" font-size="13.500" fill="#f27777" text-anchor="middle" transform="translate(1813.100 0) scale(.8 1) translate(-1813.100 0)">X</text>
<text x="1900" y="232.300" font-family="Liberation Sans, sans-serif" font-size="13.500" fill="#7be87b" text-anchor="middle" transform="translate(1900 0) scale(.8 1) translate(-1900 0)">Y</text>
</g>
</g>
</svg>
<div id="title"><svg id="appico" width="16" height="16" viewBox="0 0 16 16"><rect x="0" y="0" width="15" height="15.5" rx="2" fill="#f37d21"/><rect x="0" y="10" width="15" height="5.5" rx="1.5" fill="#b4480c"/><path d="M5 2.6h5.2v1.7H6.9v1.5h2.8v1.6H6.9V10H5z" fill="#fff"/><text x="7.5" y="14.3" font-size="3.6" fill="#fff" text-anchor="middle" font-family="Liberation Sans, sans-serif" font-weight="bold">360</text></svg><span id="ttl">Autodesk Fusion 360 (個人用 - 商用利用不可)</span>
<svg id="wc" width="130" height="23" viewBox="0 0 130 23"><path d="M0.5 10.5h10" stroke="#111" stroke-width="1"/><path d="M45.5 7.5h7v7h-7z M47.5 7.5v-2h7v7h-2" stroke="#111" fill="none" stroke-width="1"/><path d="M90 5.5l10 10M100 5.5l-10 10" stroke="#111" stroke-width="1.1"/></svg></div>
<div id="tabbar">
<svg id="qa" width="197" height="32" viewBox="0 0 197 32">
<g fill="#5a5a5a"><rect x="9" y="9" width="3.6" height="3.6"/><rect x="14" y="9" width="3.6" height="3.6"/><rect x="19" y="9" width="3.6" height="3.6"/><rect x="9" y="14" width="3.6" height="3.6"/><rect x="14" y="14" width="3.6" height="3.6"/><rect x="19" y="14" width="3.6" height="3.6"/><rect x="9" y="19" width="3.6" height="3.6"/><rect x="14" y="19" width="3.6" height="3.6"/><rect x="19" y="19" width="3.6" height="3.6"/>
<path d="M42 8.5h8l5 5v10.2H42z"/><path d="M61.5 14.5h7l-3.5 4z"/>
<path d="M87.5 9h11l2 2v12h-13zM90 10.5v4.5h7.5v-4.5zM94.6 11.2h1.8v3.1h-1.8zM90.3 18.3h7.9v4.7h-7.9z" fill-rule="evenodd"/>
<path d="M139.5 14.5h7l-3.5 4z"/></g>
<path d="M132.5 22.5c-.5-4-3-6-7-6h-4.500" fill="none" stroke="#5a5a5a" stroke-width="2"/><path d="M125.500 11.200l-5.800 5.300 5.800 5.300" fill="none" stroke="#5a5a5a" stroke-width="2"/>
<g opacity=".55"><path d="M161 22.5c.5-4 3-6 7-6h4.500" fill="none" stroke="#777" stroke-width="2"/><path d="M168 11.200l5.800 5.300-5.800 5.300" fill="none" stroke="#777" stroke-width="2"/><path d="M179 14.500h7l-3.500 4z" fill="#777"/></g>
</svg>
<div class="tab" style="left:197.5px;width:241.0px"></div>
<svg class="ti" style="left:272px;top:9px" width="17" height="18" viewBox="0 0 17 17" preserveAspectRatio="none"><path d="M1 3.200l9.500-2 5.500 2.500-9 2.600z" fill="#9a9a9a"/><path d="M1 3.200l6 3.100v9.500l-6-4z" fill="#c6c6c6"/><path d="M7 6.300l9-2.600v8.800l-9 3.300z" fill="#8d8d8d"/></svg>
<span class="tt" style="left:292px">HC-75 v37</span>
<svg class="ti" style="left:422.5px;top:12.500px" width="10" height="10" viewBox="0 0 10 10"><path d="M1 1l8 8M9 1l-8 8" stroke="#666" stroke-width="1.400"/></svg>
<div class="tab" style="left:443px;width:242px"></div>
<svg class="ti" style="left:502.5px;top:9px" width="17" height="18" viewBox="0 0 17 17" preserveAspectRatio="none"><path d="M1 3.200l9.500-2 5.500 2.500-9 2.600z" fill="#9a9a9a"/><path d="M1 3.200l6 3.100v9.500l-6-4z" fill="#c6c6c6"/><path d="M7 6.300l9-2.600v8.800l-9 3.300z" fill="#8d8d8d"/></svg>
<span class="tt" style="left:524px">cz-600d_05 v43</span>
<svg class="ti" style="left:668.5px;top:12.500px" width="10" height="10" viewBox="0 0 10 10"><path d="M1 1l8 8M9 1l-8 8" stroke="#666" stroke-width="1.400"/></svg>
<div class="tab" style="left:689px;width:242px"></div>
<svg class="ti" style="left:727.5px;top:9px" width="13" height="16" viewBox="0 0 13 16"><path d="M3.5 7V4.800a3 3 0 0 1 6 0V7" fill="none" stroke="#7d7d7d" stroke-width="1.500"/><rect x="1.500" y="7" width="10" height="7.500" rx="1" fill="#7d7d7d"/><path d="M3.500 9.500h6M3.500 11.800h6" stroke="#c4c4c4" stroke-width="1"/></svg>
<span class="tt" style="left:747px">cz-601d_1_25_open v0*</span>
<svg class="ti" style="left:915px;top:12.500px" width="10" height="10" viewBox="0 0 10 10"><path d="M1 1l8 8M9 1l-8 8" stroke="#666" stroke-width="1.400"/></svg>
<div class="tab" style="left:935px;width:241.5px"></div>
<svg class="ti" style="left:993px;top:9px" width="17" height="18" viewBox="0 0 17 17" preserveAspectRatio="none"><path d="M1 3.200l9.500-2 5.500 2.500-9 2.600z" fill="#9a9a9a"/><path d="M1 3.200l6 3.100v9.500l-6-4z" fill="#c6c6c6"/><path d="M7 6.300l9-2.600v8.800l-9 3.300z" fill="#8d8d8d"/></svg>
<span class="tt" style="left:1013px">cz-601d_1_25 v1</span>
<svg class="ti" style="left:1160.5px;top:12.500px" width="10" height="10" viewBox="0 0 10 10"><path d="M1 1l8 8M9 1l-8 8" stroke="#666" stroke-width="1.400"/></svg>
<div class="tab act" style="left:1180.5px;width:242.5px"></div>
<svg class="ti" style="left:1235.5px;top:9px" width="17" height="18" viewBox="0 0 17 17" preserveAspectRatio="none"><path d="M1 3.200l9.500-2 5.500 2.500-9 2.600z" fill="#5e5e5e"/><path d="M1 3.200l6 3.100v9.500l-6-4z" fill="#b4b4b4"/><path d="M7 6.300l9-2.600v8.800l-9 3.300z" fill="#555555"/></svg>
<span class="tt act" style="left:1256.5px">cz-600d_1_25 v3*</span>
<svg class="ti" style="left:1406.5px;top:12.500px" width="10" height="10" viewBox="0 0 10 10"><path d="M1 1l8 8M9 1l-8 8" stroke="#555" stroke-width="1.400"/></svg>
<div class="tab" style="left:1427.5px;width:241.5px"></div>
<svg class="ti" style="left:1466.5px;top:9px" width="17" height="18" viewBox="0 0 17 17" preserveAspectRatio="none"><path d="M1 3.200l9.500-2 5.500 2.500-9 2.600z" fill="#9a9a9a"/><path d="M1 3.200l6 3.100v9.500l-6-4z" fill="#c6c6c6"/><path d="M7 6.300l9-2.600v8.800l-9 3.300z" fill="#8d8d8d"/></svg>
<span class="tt" style="left:1487px">cz-600d_1_25_open v3</span>
<svg class="ti" style="left:1652.5px;top:12.500px" width="10" height="10" viewBox="0 0 10 10"><path d="M1 1l8 8M9 1l-8 8" stroke="#666" stroke-width="1.400"/></svg>
<div class="tab" style="left:1673px;width:27.500px"></div><svg class="ti" style="left:1680px;top:11px" width="14" height="14" viewBox="0 0 14 14"><path d="M7 1v12M1 7h12" stroke="#666" stroke-width="2.200"/></svg>
<svg class="ti" style="left:1708px;top:4px" width="212" height="28" viewBox="0 0 212 28">
<path d="M5 4h10l3 3v4l-6 6v4H5z" fill="#636363"/><path d="M11.500 13l8-2-2 8z" fill="#636363" stroke="#ccc" stroke-width=".8"/>
<text x="24.500" y="15" font-family="Liberation Sans, sans-serif" font-size="10.500" fill="#444" textLength="21">8/10</text>
<circle cx="77.500" cy="12" r="7.300" fill="none" stroke="#666" stroke-width="2.200"/><path d="M77.500 7.500V12.500H82" stroke="#666" stroke-width="2" fill="none"/>
<path d="M105 17.500c2-1.500 2-4 2.300-7 .3-3 1.700-4.500 3.700-4.500s3.400 1.500 3.700 4.500c.3 3 .3 5.500 2.300 7z" fill="#666"/><path d="M109 19.500h4l-2 1.800z" fill="#666"/><circle cx="114.300" cy="6.300" r="2.600" fill="#1a9ae0"/>
<circle cx="143.500" cy="12" r="8" fill="#666"/><text x="143.500" y="16.500" font-family="Liberation Sans, sans-serif" font-weight="bold" font-size="13" fill="#ddd" text-anchor="middle">?</text>
<defs><linearGradient id="av" x1="0" y1="0" x2="0" y2="1"><stop offset="0" stop-color="#b5c3d6"/><stop offset="1" stop-color="#7f93ad"/></linearGradient><clipPath id="avc"><circle cx="184.500" cy="12" r="12"/></clipPath></defs>
<circle cx="184.500" cy="12" r="12" fill="url(#av)"/><g clip-path="url(#avc)" fill="#4f5b6e"><ellipse cx="184.500" cy="9" rx="5.600" ry="7"/><path d="M172 25c1-5 5-7 9-8h7c4 1 8 3 9 8z"/></g>
</svg>
</div>
<div id="toolbar">
<div id="design"></div><span class="tl" style="left:41.3px;top:33.5px;font-weight:bold;color:#333;-webkit-text-stroke:.35px #333"><span class="fx" style="transform:scaleX(1.1992)"><span class="k" style="margin-right:-12.32px">デザイン</span></span></span><i class="dd" style="position:absolute;left:84.4px;top:38.5px"></i>
<span class="tl sel" style="left:149.5px"><span class="fx" style="transform:scaleX(1.0193)"><span class="k" style="margin-right:-12.32px">ソリッド</span></span></span>
<span class="tl " style="left:227.6px"><span class="fx" style="transform:scaleX(1.0048)"><span class="k" style="margin-right:-15.40px">サーフェス</span></span></span>
<span class="tl " style="left:314.9px"><span class="fx" style="transform:scaleX(0.9499)"><span class="k" style="margin-right:-12.32px">メッシュ</span></span></span>
<span class="tl " style="left:388.3px"><span class="fx" style="transform:scaleX(1.0036)"><span class="k" style="margin-right:-12.32px">フォーム</span></span></span>
<span class="tl " style="left:465.9px"><span class="fx" style="transform:scaleX(1.0673)"><span class="k" style="margin-right:-9.24px">シート</span>&nbsp;<span class="k" style="margin-right:-9.24px">メタル</span></span></span>
<span class="tl " style="left:564.0px"><span class="fx" style="transform:scaleX(0.9657)"><span class="k" style="margin-right:-18.48px">プラスチック</span></span></span>
<span class="tl " style="left:657.4px"><span class="fx" style="transform:scaleX(0.9431)"><span class="k" style="margin-right:-21.56px">ユーティリティ</span></span></span>
<div id="ul"></div>
<span class="gl" style="left:219.6px"><span class="fx" style="transform:scaleX(0.9545)">作成</span></span><i class="dd" style="position:absolute;left:243.8px;top:69.500px"></i>
<span class="gl" style="left:467.6px"><span class="fx" style="transform:scaleX(0.9500)">修正</span></span><i class="dd" style="position:absolute;left:491.4px;top:69.500px"></i>
<span class="gl" style="left:642.5px"><span class="fx" style="transform:scaleX(0.9922)"><span class="k" style="margin-right:-15.40px">アセンブリ</span></span></span><i class="dd" style="position:absolute;left:684.6px;top:69.500px"></i>
<span class="gl" style="left:730.4px"><span class="fx" style="transform:scaleX(0.9773)">構築</span></span><i class="dd" style="position:absolute;left:754.5px;top:69.500px"></i>
<span class="gl" style="left:789.5px"><span class="fx" style="transform:scaleX(0.9545)">検査</span></span><i class="dd" style="position:absolute;left:813.5px;top:69.500px"></i>
<span class="gl" style="left:848.2px"><span class="fx" style="transform:scaleX(0.9545)">挿入</span></span><i class="dd" style="position:absolute;left:872.6px;top:69.500px"></i>
<span class="gl" style="left:907.6px"><span class="fx" style="transform:scaleX(0.9500)">選択</span></span><i class="dd" style="position:absolute;left:931.6px;top:69.500px"></i>
<div class="sep" style="left:349.6px"></div>
<div class="sep" style="left:618.9px"></div>
<div class="sep" style="left:715.6px"></div>
<div class="sep" style="left:775px"></div>
<div class="sep" style="left:833.7px"></div>
<div class="sep" style="left:893px"></div>
</div>
<svg id="tbi" width="1920" height="82" viewBox="0 55 1920 82" style="position:absolute;left:0;top:55px">
<g stroke="#5f5f5f" stroke-width="1" fill="none"><path d="M138.500 84h27.500v19M138.500 84v27.500h16" stroke-dasharray="11 2"/><path d="M146 91.500h13c0 8-5 13.500-13 14z" /></g>
<g fill="#5f5f5f"><rect x="137" y="82.500" width="3" height="3"/><rect x="164.500" y="82.500" width="3" height="3"/><rect x="137" y="110" width="3" height="3"/><rect x="144.500" y="90" width="3" height="3"/><rect x="157.500" y="90" width="3" height="3"/><rect x="144.500" y="103" width="3" height="3"/></g>
<path d="M155.500 107.500h5v-5h3.500v5h5v3.500h-5v5h-3.500v-5h-5z" fill="#21a038"/>
<path d="M181 107l21 0 4.500-4.500v4.500l-4.500 6.500h-21z" fill="#bdbdbd"/><path d="M181 107h21v6.500h-21z" fill="#dcdcdc"/>
<path d="M181 88.500l4.500-6h19.500l-3 6z" fill="#8ccaf8"/><path d="M181 88.500h21v20h-21z" fill="#6cb0e6"/><path d="M202 88.500l3-6v20l-3 6z" fill="#4a94d2"/>
<path d="M208.500 108V86" stroke="#222" stroke-width="1.200"/><path d="M206 88.500l2.500-5 2.500 5z" fill="#222"/>
<path d="M223 98c7-9 24-9 32 0l-5 5c-6-5-17-5-22 0z" fill="#8ccaf8"/><path d="M223 98l5 5c5-5 16-5 22 0v7.500c-6-5-17-5-22 0l-5-4.500z" fill="#6cb0e6"/><path d="M223 98l5 5v7.500l-5-4.500z" fill="#4a94d2"/><path d="M250 103l5-5v7.500l-5 5z" fill="#fff" stroke="#444" stroke-width="1"/>
<path d="M226 88.500c8-6 20-6 27 1" stroke="#333" stroke-width="1.100" fill="none"/><path d="M224 90l5.500-3.500-.5 4.500z" fill="#333"/>
<path d="M266.500 88l6-6h25l-6 6z" fill="#ededed" stroke="#5f5f5f" stroke-width="1"/><path d="M291.500 88l6-6v25l-6 6z" fill="#bdbdbd" stroke="#5f5f5f" stroke-width="1"/><rect x="266.500" y="88" width="25" height="25" fill="#dcdcdc" stroke="#5f5f5f" stroke-width="1"/>
<circle cx="279.5" cy="100.3" r="8.3" fill="#f4f4f4" stroke="#5f5f5f" stroke-width="1"/><clipPath id="hcl"><circle cx="279.5" cy="100.3" r="6.6"/></clipPath><circle cx="279.5" cy="100.3" r="6.6" fill="#6cb0e6"/><circle cx="283" cy="97" r="5.2" fill="#fdfdfd" clip-path="url(#hcl)"/><circle cx="279.5" cy="100.3" r="6.6" fill="none" stroke="#4a94d2" stroke-width=".8"/>
<path d="M312.500 87.500h21.500M312.500 87.500v21M312.500 108.500h21.500" stroke="#5f5f5f" stroke-width="1.200" fill="none"/><rect x="309.500" y="84.500" width="6" height="6" fill="#fff" stroke="#5f5f5f" stroke-width="1"/><rect x="330" y="84" width="7" height="7" fill="#6cb0e6"/><rect x="309" y="105" width="7" height="7" fill="#6cb0e6"/><rect x="330" y="105" width="7" height="7" fill="#6cb0e6"/>
<path d="M364 89l6-7h5v25l-5 6.500h-6z" fill="#dcdcdc" stroke="#5f5f5f" stroke-width="1"/><path d="M371 89l6-7h9l-6 7z" fill="#8ccaf8"/><rect x="371" y="89" width="9" height="24.500" fill="#6cb0e6"/><path d="M380 89l6-7v24.500l-6 7z" fill="#4a94d2"/><path d="M384 97.500h7" stroke="#222" stroke-width="1.300"/><path d="M390 95l3.500 2.500-3.500 2.500z" fill="#222"/><rect x="383.500" y="96" width="2" height="3" fill="#fff"/>
<path d="M406.500 90l7-8h10c8 0 14.500 6 14.500 14v10l-7 7.500h-24.500z" fill="#dcdcdc" stroke="#5f5f5f" stroke-width="1"/><path d="M431 113.500v-10l7-7.500v10z" fill="#bdbdbd" stroke="#5f5f5f" stroke-width="1"/><path d="M418 88.500l6-6.500c7.500 0 14 6 14 13.500l-7 7.500c0-8-5-13.500-13-14.500z" fill="#6cb0e6"/>
<path d="M449.500 89l8-7h23l-8 7z" fill="#ededed" stroke="#5f5f5f" stroke-width="1"/><path d="M472.500 89l8-7v24.500l-8 7z" fill="#bdbdbd" stroke="#5f5f5f" stroke-width="1"/><rect x="449.500" y="89" width="23" height="24.500" fill="#dcdcdc" stroke="#5f5f5f" stroke-width="1"/><rect x="453" y="93" width="16.500" height="17" fill="#f6f6f6"/><path d="M453 94h8v9l-8 7z" fill="#4a94d2"/><path d="M453 110l8-7h8.500v7z" fill="#8ccaf8"/>
<path d="M492 93l4-4h10l-4 4z" fill="#8ccaf8"/><path d="M502 86l5-4.500h17l-5 4.500z" fill="#8ccaf8"/><path d="M492 93h10v-7h17v17h-8.500v10.500h-18.500z" fill="#6cb0e6"/><path d="M519 86l5-4.500v17l-5 4.500z" fill="#4a94d2"/><path d="M510.500 103h8.500l-4 4.500v6l-4.500 0z" fill="#4a94d2"/>
<path d="M537 88l5-6h23l-5 6z" fill="#8ccaf8"/><rect x="537" y="88" width="23" height="9.500" fill="#6cb0e6"/><path d="M560 88l5-6v9.500l-5 6z" fill="#4a94d2"/><path d="M537 102.500h23v10h-23z" fill="#dcdcdc" stroke="#5f5f5f" stroke-width="1"/><path d="M560 102.500l5-6v10l-5 6z" fill="#bdbdbd" stroke="#5f5f5f" stroke-width="1"/><path d="M535 100.500h24l7.500-8.500" stroke="#1c8ae0" stroke-width="1.300" fill="none"/>
<g fill="#333"><path d="M594 82l5.500 7h-4v7.500h7.500v-4l7 5.500-7 5.500v-4h-7.500v7.500h4l-5.500 7-5.500-7h4v-7.500h-7.500v4l-7-5.500 7-5.500v4h7.500v-7.500h-4z"/></g>
<path d="M632 90l3-4h11l-3 4z" fill="#8ccaf8"/><rect x="632" y="90" width="11" height="11" fill="#6cb0e6"/><path d="M643 90l3-4v11l-3 4z" fill="#4a94d2"/><rect x="632" y="101.500" width="11.500" height="12" fill="#dcdcdc" stroke="#777" stroke-width="1"/><path d="M644.500 101.500l4-4h11l-4 4z" fill="#ededed" stroke="#777" stroke-width=".8"/><rect x="644.500" y="101.500" width="11" height="12" fill="#dcdcdc" stroke="#777" stroke-width="1"/><path d="M655.500 101.500l4-4v12l-4 4z" fill="#bdbdbd" stroke="#777" stroke-width=".8"/>
<path d="M655.500 82.500l1.800 5 4.500-3-1.800 4.800 5 .7-4.300 2.800 3.300 3.800-5-.8-.5 5-3-4-3 4-.5-5-5 .8 3.300-3.800-4.300-2.800 5-.7-1.800-4.800 4.500 3z" fill="#f9a602"/>
<path d="M677.500 94l7.500-8.500c1-1.500 4-1.500 4.500 0v8.500l-7.500 9v6l-4.500 1.500z" fill="#dcdcdc" stroke="#777" stroke-width="1"/><ellipse cx="687.200" cy="85.800" rx="2.300" ry="1.300" fill="#ededed" stroke="#888" stroke-width=".6"/><path d="M697.500 86.500l7 8.500v16l-7-6.500v2.500c-1 1-4 1-5 0v-9.500c1-1.200 4-1.200 5 0z" fill="#dcdcdc" stroke="#777" stroke-width="1"/><path d="M692.500 97.500c1 1 4 1 5 0" stroke="#888" fill="none" stroke-width=".7"/><path d="M686.200 97v5M695.500 90v5.500" stroke="#1c8ae0" stroke-width="1.200"/>
<path d="M732.500 91l9-9h6l-8 9z" fill="#ededed" stroke="#5f5f5f" stroke-width="1"/><rect x="732.500" y="91" width="8" height="21.500" fill="#dcdcdc" stroke="#5f5f5f" stroke-width="1"/><path d="M741 91l9-9v21.500l-9 9z" fill="#5bbf7a"/><path d="M753.500 91l9-9v21.500l-9 9z" fill="#e4986a"/>
<rect x="792" y="99.800" width="28" height="6.200" fill="#f9a602"/><path d="M795 99.800v2.500M798 99.800v1.500M801 99.800v2.500M804 99.800v1.500M807 99.800v2.500M810 99.800v1.500M813 99.800v2.500M816 99.800v1.500" stroke="#a56a00" stroke-width=".9"/><path d="M792.800 90v9M819.500 90v9M794 94.500h24.500" stroke="#666" stroke-width="1.100"/><path d="M793.300 94.500l3.500-2v4zM819 94.500l-3.500-2v4z" fill="#666"/>
<rect x="850" y="83" width="29" height="29" fill="#86c7fa" stroke="#5a9fd8" stroke-width=".6"/><path d="M850 102c3-5 6-7.500 9-7.500s5 3 8.500 9.500c2-3 4-4.500 6-4.500 2 0 4 2 5.500 5v7.500h-29z" fill="#4a94d2"/><circle cx="871" cy="91" r="3.200" fill="#fdfdc8"/>
<rect x="905" y="79" width="38" height="38" fill="#0696d7"/><rect x="908.500" y="82.500" width="27" height="21" fill="none" stroke="#8cf08c" stroke-width="1.200" stroke-dasharray="4 2"/><path d="M929.500 96.500v16l3.500-3.200 2.300 5 2.200-1-2.300-5h4.800z" fill="#fff"/>
</svg>
<div id="bh"><svg class="ic" style="left:4.500px;top:7.500px" width="11" height="8" viewBox="0 0 11 8"><path d="M5 0v8L0 4zM10.500 0v8L5.500 4z" fill="#333"/></svg>
<span class="bt" style="left:23.5px;top:5.5px"><span class="fx" style="transform:scaleX(1.0099)"><span class="k" style="margin-right:-12.32px">ブラウザ</span></span></span>
<svg class="ic" style="left:277.500px;top:7px" width="22" height="11" viewBox="0 0 22 11"><circle cx="5" cy="5.500" r="4.600" fill="#222"/><rect x="2.300" y="4.700" width="5.400" height="1.600" fill="#fff"/><path d="M17.500 .5v10" stroke="#555" stroke-width="1"/><path d="M19.500 2.500v6" stroke="#999" stroke-width="1"/></svg></div>
<div style="position:absolute;left:8.2px;top:175px;width:5.5px;height:808px;background:#cbcbcb"></div><div style="position:absolute;left:8.2px;top:174.5px;width:5.5px;height:187px;background:#9c9c9c;border-radius:2.5px"></div>
<div class="rb" style="left:39.700px;top:174.3px;width:179.8px"></div>
<svg class="ic" style="left:20px;top:177.5px" width="12" height="12" viewBox="0 0 12 12"><defs><linearGradient id="tg2" x1="0" y1="0" x2="1" y2="1"><stop offset=".3" stop-color="#d0d0d0"/><stop offset="1" stop-color="#4a4a4a"/></linearGradient></defs><path d="M11 1v10H1z" fill="url(#tg2)" stroke="#333" stroke-width="1.100" stroke-linejoin="round"/></svg>
<svg class="ic" style="left:43.3px;top:179px" width="16" height="10" viewBox="0 0 16 10"><path d="M.5 5C3 1.300 5.500 .3 8 .3S13 1.300 15.500 5C13 8.700 10.500 9.700 8 9.700S3 8.700 .5 5z" fill="#9a9a9a"/><circle cx="8" cy="5" r="3.300" fill="#d9d9d9"/><circle cx="8" cy="5" r="1.800" fill="#9a9a9a"/></svg>
<div style="position:absolute;left:65px;top:176.5px;width:129.700px;height:15.200px;background:#9b9b9b"></div>
<svg class="ic" style="left:67.5px;top:176px" width="17" height="16" viewBox="0 0 17 16"><path d="M1 4.500l4-4h11l-4 4z" fill="#fdfdfd" stroke="#5a5a5a" stroke-width=".9"/><path d="M12 4.500l4-4v10.500l-4 4z" fill="#d0d0d0" stroke="#5a5a5a" stroke-width=".9"/><rect x="1" y="4.500" width="11" height="10.500" rx="1" fill="#efefef" stroke="#5a5a5a" stroke-width=".9"/></svg>
<span class="bt" style="left:98px;top:177.5px;color:#fff;font-weight:bold">cz-600d_1_25 v3</span>
<svg class="ic" style="left:198.800px;top:177.5px" width="13" height="13" viewBox="0 0 13 13"><circle cx="6.500" cy="6.500" r="5.700" fill="#fff" stroke="#222" stroke-width="1.100"/><circle cx="6.500" cy="6.500" r="2.400" fill="#222"/></svg>
<div class="rb" style="left:58px;top:198.3px;width:121.80000000000001px"></div>
<svg class="ic" style="left:39.5px;top:201.5px" width="10" height="13" viewBox="0 0 10 13"><defs><linearGradient id="tg" x1="0" y1="0" x2="1" y2="1"><stop offset="0" stop-color="#fff"/><stop offset="1" stop-color="#c9c9c9"/></linearGradient></defs><path d="M1 1l8 5.500-8 5.500z" fill="url(#tg)" stroke="#333" stroke-width="1.200" stroke-linejoin="round"/></svg>
<svg class="ic" style="left:60.5px;top:199.5px" width="17" height="17" viewBox="-8.500 -8.500 17 17"><g fill="#9a9a9a"><circle r="5.600"/><g id="gt"><rect x="-1.700" y="-8.300" width="3.400" height="16.600" rx=".6"/></g><use href="#gt" transform="rotate(45)"/><use href="#gt" transform="rotate(90)"/><use href="#gt" transform="rotate(135)"/></g><circle r="2.500" fill="#f2f2f2"/></svg>
<span class="bt" style="left:90.8px;top:201.5px"><span class="fx" style="transform:scaleX(1.0109)"><span class="k" style="margin-right:-21.56px">ドキュメントの</span>設定</span></span>
<div class="rb" style="left:58px;top:222.3px;width:89.6px"></div>
<svg class="ic" style="left:39.5px;top:225.5px" width="10" height="13" viewBox="0 0 10 13"><defs><linearGradient id="tg" x1="0" y1="0" x2="1" y2="1"><stop offset="0" stop-color="#fff"/><stop offset="1" stop-color="#c9c9c9"/></linearGradient></defs><path d="M1 1l8 5.500-8 5.500z" fill="url(#tg)" stroke="#333" stroke-width="1.200" stroke-linejoin="round"/></svg>
<svg class="ic" style="left:60.5px;top:225px" width="17" height="13" viewBox="0 0 17 13"><path d="M.5 0h6l1.200 1.700H.5z" fill="#a9a9a9"/><path d="M.5 2.600h16V13H.5z" fill="#9d9d9d"/><path d="M.5 2.600h16v1.200H.5z" fill="#b9b9b9"/></svg>
<span class="bt" style="left:88.8px;top:225.5px"><span class="fx" style="transform:scaleX(1.0357)"><span class="k" style="margin-right:-9.24px">ビュー</span>管理</span></span>
<div class="rb" style="left:58px;top:246.3px;width:90.80000000000001px"></div>
<svg class="ic" style="left:39.5px;top:249.5px" width="10" height="13" viewBox="0 0 10 13"><defs><linearGradient id="tg" x1="0" y1="0" x2="1" y2="1"><stop offset="0" stop-color="#fff"/><stop offset="1" stop-color="#c9c9c9"/></linearGradient></defs><path d="M1 1l8 5.500-8 5.500z" fill="url(#tg)" stroke="#333" stroke-width="1.200" stroke-linejoin="round"/></svg>
<svg class="ic" style="left:60.8px;top:250px" width="16" height="12" viewBox="0 0 16 12"><path d="M.5 6C3 2.300 5.500 1.300 8 1.300S13 2.300 15.500 6C13 9.700 10.500 10.700 8 10.700S3 9.700 .5 6z" fill="none" stroke="#b5b5b5" stroke-width="1"/><circle cx="8" cy="6" r="2.600" fill="none" stroke="#b5b5b5" stroke-width="1"/><path d="M2.500 1l11.500 10" stroke="#b5b5b5" stroke-width="1.100"/></svg>
<svg class="ic" style="left:85.7px;top:249px" width="17" height="13" viewBox="0 0 17 13"><path d="M.5 0h6l1.200 1.700H.5z" fill="#a9a9a9"/><path d="M.5 2.600h16V13H.5z" fill="#9d9d9d"/><path d="M.5 2.600h16v1.200H.5z" fill="#b9b9b9"/></svg>
<span class="bt" style="left:115.3px;top:249.5px"><span class="fx" style="transform:scaleX(0.9636)">原点</span></span>
<div class="rb" style="left:58px;top:270.3px;width:90.80000000000001px"></div>
<svg class="ic" style="left:38px;top:274px" width="12" height="12" viewBox="0 0 12 12"><defs><linearGradient id="tg2" x1="0" y1="0" x2="1" y2="1"><stop offset=".3" stop-color="#d0d0d0"/><stop offset="1" stop-color="#4a4a4a"/></linearGradient></defs><path d="M11 1v10H1z" fill="url(#tg2)" stroke="#333" stroke-width="1.100" stroke-linejoin="round"/></svg>
<svg class="ic" style="left:60.8px;top:275px" width="16" height="10" viewBox="0 0 16 10"><path d="M.5 5C3 1.300 5.500 .3 8 .3S13 1.300 15.500 5C13 8.700 10.500 9.700 8 9.700S3 8.700 .5 5z" fill="#9a9a9a"/><circle cx="8" cy="5" r="3.300" fill="#d9d9d9"/><circle cx="8" cy="5" r="1.800" fill="#9a9a9a"/></svg>
<svg class="ic" style="left:85.7px;top:273px" width="17" height="13" viewBox="0 0 17 13"><path d="M.5 0h6l1.200 1.700H.5z" fill="#a9a9a9"/><path d="M.5 2.600h16V13H.5z" fill="#9d9d9d"/><path d="M.5 2.600h16v1.200H.5z" fill="#b9b9b9"/></svg>
<span class="bt" style="left:114.8px;top:273.5px"><span class="fx" style="transform:scaleX(1.0561)"><span class="k" style="margin-right:-9.24px">ボディ</span></span></span>
<div class="rb" style="left:76px;top:294.3px;width:118.69999999999999px"></div>
<svg class="ic" style="left:57.5px;top:297.5px" width="10" height="13" viewBox="0 0 10 13"><defs><linearGradient id="tg" x1="0" y1="0" x2="1" y2="1"><stop offset="0" stop-color="#fff"/><stop offset="1" stop-color="#c9c9c9"/></linearGradient></defs><path d="M1 1l8 5.500-8 5.500z" fill="url(#tg)" stroke="#333" stroke-width="1.200" stroke-linejoin="round"/></svg>
<svg class="ic" style="left:79.2px;top:299px" width="16" height="10" viewBox="0 0 16 10"><path d="M.5 5C3 1.300 5.500 .3 8 .3S13 1.300 15.500 5C13 8.700 10.500 9.700 8 9.700S3 8.700 .5 5z" fill="#9a9a9a"/><circle cx="8" cy="5" r="3.300" fill="#d9d9d9"/><circle cx="8" cy="5" r="1.800" fill="#9a9a9a"/></svg>
<svg class="ic" style="left:103.5px;top:297px" width="17" height="13" viewBox="0 0 17 13"><path d="M.5 0h6l1.200 1.700H.5z" fill="#a9a9a9"/><path d="M.5 2.600h16V13H.5z" fill="#9d9d9d"/><path d="M.5 2.600h16v1.200H.5z" fill="#b9b9b9"/></svg>
<span class="bt" style="left:132.7px;top:297.5px"><span class="fx" style="transform:scaleX(1.0542)"><span class="k" style="margin-right:-12.32px">スタンド</span>&nbsp;(3)</span></span>
<div class="rb" style="left:76px;top:318.3px;width:146.7px"></div>
<svg class="ic" style="left:57.5px;top:321.5px" width="10" height="13" viewBox="0 0 10 13"><defs><linearGradient id="tg" x1="0" y1="0" x2="1" y2="1"><stop offset="0" stop-color="#fff"/><stop offset="1" stop-color="#c9c9c9"/></linearGradient></defs><path d="M1 1l8 5.500-8 5.500z" fill="url(#tg)" stroke="#333" stroke-width="1.200" stroke-linejoin="round"/></svg>
<svg class="ic" style="left:79.2px;top:323px" width="16" height="10" viewBox="0 0 16 10"><path d="M.5 5C3 1.300 5.500 .3 8 .3S13 1.300 15.500 5C13 8.700 10.500 9.700 8 9.700S3 8.700 .5 5z" fill="#9a9a9a"/><circle cx="8" cy="5" r="3.300" fill="#d9d9d9"/><circle cx="8" cy="5" r="1.800" fill="#9a9a9a"/></svg>
<svg class="ic" style="left:103.5px;top:321px" width="17" height="13" viewBox="0 0 17 13"><path d="M.5 0h6l1.200 1.700H.5z" fill="#a9a9a9"/><path d="M.5 2.600h16V13H.5z" fill="#9d9d9d"/><path d="M.5 2.600h16v1.200H.5z" fill="#b9b9b9"/></svg>
<span class="bt" style="left:132.7px;top:321.5px"><span class="fx" style="transform:scaleX(1.0457)">内部<span class="k" style="margin-right:-12.32px">フレーム</span>&nbsp;(12)</span></span>
<div class="rb" style="left:76px;top:342.3px;width:130.6px"></div>
<svg class="ic" style="left:79.2px;top:347px" width="16" height="10" viewBox="0 0 16 10"><path d="M.5 5C3 1.300 5.500 .3 8 .3S13 1.300 15.500 5C13 8.700 10.500 9.700 8 9.700S3 8.700 .5 5z" fill="#9a9a9a"/><circle cx="8" cy="5" r="3.300" fill="#d9d9d9"/><circle cx="8" cy="5" r="1.800" fill="#9a9a9a"/></svg>
<svg class="ic" style="left:103.5px;top:343px" width="17" height="18" viewBox="0 0 17 18"><defs><linearGradient id="bg0" x1="0" y1="0" x2="1" y2="0"><stop offset="0" stop-color="#fdfdfd"/><stop offset="1" stop-color="#c9ccd2"/></linearGradient></defs><path d="M1 4.200C1 .8 16 .8 16 4.200V14c0 3.600-15 3.600-15 0z" fill="#fbfbfb" stroke="#4a4f58" stroke-width="1.100"/><path d="M4.500 6.500h8.500v9.500c-2.500 1-6 1-8.500 0z" fill="url(#bg0)"/></svg>
<span class="bt" style="left:132.7px;top:345.5px"><span class="fx" style="transform:scaleX(0.9941)"><span class="k" style="margin-right:-24.64px">フロントポケット</span></span></span>
<div class="rb" style="left:76px;top:366.3px;width:138.5px"></div>
<svg class="ic" style="left:79.2px;top:371px" width="16" height="10" viewBox="0 0 16 10"><path d="M.5 5C3 1.300 5.500 .3 8 .3S13 1.300 15.500 5C13 8.700 10.500 9.700 8 9.700S3 8.700 .5 5z" fill="#9a9a9a"/><circle cx="8" cy="5" r="3.300" fill="#d9d9d9"/><circle cx="8" cy="5" r="1.800" fill="#9a9a9a"/></svg>
<svg class="ic" style="left:103.5px;top:367px" width="17" height="18" viewBox="0 0 17 18"><defs><linearGradient id="bg1" x1="0" y1="0" x2="1" y2="0"><stop offset="0" stop-color="#fdfdfd"/><stop offset="1" stop-color="#c9ccd2"/></linearGradient></defs><path d="M1 4.200C1 .8 16 .8 16 4.200V14c0 3.600-15 3.600-15 0z" fill="#fbfbfb" stroke="#4a4f58" stroke-width="1.100"/><path d="M4.500 6.500h8.500v9.500c-2.500 1-6 1-8.500 0z" fill="url(#bg1)"/></svg>
<span class="bt" style="left:132.7px;top:369.5px"><span class="fx" style="transform:scaleX(0.9792)"><span class="k" style="margin-right:-27.72px">フロント・フレーム</span></span></span>
<div class="rb" style="left:76px;top:390.3px;width:182.7px"></div>
<svg class="ic" style="left:79.2px;top:395px" width="16" height="10" viewBox="0 0 16 10"><path d="M.5 5C3 1.300 5.500 .3 8 .3S13 1.300 15.500 5C13 8.700 10.500 9.700 8 9.700S3 8.700 .5 5z" fill="#9a9a9a"/><circle cx="8" cy="5" r="3.300" fill="#d9d9d9"/><circle cx="8" cy="5" r="1.800" fill="#9a9a9a"/></svg>
<svg class="ic" style="left:103.5px;top:391px" width="17" height="18" viewBox="0 0 17 18"><defs><linearGradient id="bg2" x1="0" y1="0" x2="1" y2="0"><stop offset="0" stop-color="#fdfdfd"/><stop offset="1" stop-color="#c9ccd2"/></linearGradient></defs><path d="M1 4.200C1 .8 16 .8 16 4.200V14c0 3.600-15 3.600-15 0z" fill="#fbfbfb" stroke="#4a4f58" stroke-width="1.100"/><path d="M4.500 6.500h8.500v9.500c-2.500 1-6 1-8.500 0z" fill="url(#bg2)"/></svg>
<span class="bt" style="left:132.7px;top:393.5px"><span class="fx" style="transform:scaleX(0.9282)"><span class="k" style="margin-right:-27.72px">ボディ・フロント・</span>LED<span class="k" style="margin-right:-3.08px">・</span>導光</span></span>
<div class="rb" style="left:76px;top:414.3px;width:186.89999999999998px"></div>
<svg class="ic" style="left:79.2px;top:419px" width="16" height="10" viewBox="0 0 16 10"><path d="M.5 5C3 1.300 5.500 .3 8 .3S13 1.300 15.500 5C13 8.700 10.500 9.700 8 9.700S3 8.700 .5 5z" fill="#9a9a9a"/><circle cx="8" cy="5" r="3.300" fill="#d9d9d9"/><circle cx="8" cy="5" r="1.800" fill="#9a9a9a"/></svg>
<svg class="ic" style="left:103.5px;top:415px" width="17" height="18" viewBox="0 0 17 18"><defs><linearGradient id="bg3" x1="0" y1="0" x2="1" y2="0"><stop offset="0" stop-color="#fdfdfd"/><stop offset="1" stop-color="#c9ccd2"/></linearGradient></defs><path d="M1 4.200C1 .8 16 .8 16 4.200V14c0 3.600-15 3.600-15 0z" fill="#fbfbfb" stroke="#4a4f58" stroke-width="1.100"/><path d="M4.500 6.500h8.500v9.500c-2.500 1-6 1-8.500 0z" fill="url(#bg3)"/></svg>
<span class="bt" style="left:132.7px;top:417.5px"><span class="fx" style="transform:scaleX(0.9552)"><span class="k" style="margin-right:-27.72px">ボディ・フロント・</span>LED<span class="k" style="margin-right:-12.32px">・パネル</span></span></span>
<div class="rb" style="left:76px;top:438.3px;width:134.8px"></div>
<svg class="ic" style="left:79.2px;top:443px" width="16" height="10" viewBox="0 0 16 10"><path d="M.5 5C3 1.300 5.500 .3 8 .3S13 1.300 15.500 5C13 8.700 10.500 9.700 8 9.700S3 8.700 .5 5z" fill="#9a9a9a"/><circle cx="8" cy="5" r="3.300" fill="#d9d9d9"/><circle cx="8" cy="5" r="1.800" fill="#9a9a9a"/></svg>
<svg class="ic" style="left:103.5px;top:439px" width="17" height="18" viewBox="0 0 17 18"><defs><linearGradient id="bg4" x1="0" y1="0" x2="1" y2="0"><stop offset="0" stop-color="#fdfdfd"/><stop offset="1" stop-color="#c9ccd2"/></linearGradient></defs><path d="M1 4.200C1 .8 16 .8 16 4.200V14c0 3.600-15 3.600-15 0z" fill="#fbfbfb" stroke="#4a4f58" stroke-width="1.100"/><path d="M4.500 6.500h8.500v9.500c-2.500 1-6 1-8.500 0z" fill="url(#bg4)"/></svg>
<span class="bt" style="left:132.7px;top:441.5px"><span class="fx" style="transform:scaleX(0.9970)">赤外線受光窓</span></span>
<div class="rb" style="left:76px;top:462.3px;width:154.6px"></div>
<svg class="ic" style="left:79.2px;top:467px" width="16" height="10" viewBox="0 0 16 10"><path d="M.5 5C3 1.300 5.500 .3 8 .3S13 1.300 15.500 5C13 8.700 10.500 9.700 8 9.700S3 8.700 .5 5z" fill="#9a9a9a"/><circle cx="8" cy="5" r="3.300" fill="#d9d9d9"/><circle cx="8" cy="5" r="1.800" fill="#9a9a9a"/></svg>
<svg class="ic" style="left:103.5px;top:463px" width="17" height="18" viewBox="0 0 17 18"><defs><linearGradient id="bg5" x1="0" y1="0" x2="1" y2="0"><stop offset="0" stop-color="#fdfdfd"/><stop offset="1" stop-color="#c9ccd2"/></linearGradient></defs><path d="M1 4.200C1 .8 16 .8 16 4.200V14c0 3.600-15 3.600-15 0z" fill="#fbfbfb" stroke="#4a4f58" stroke-width="1.100"/><path d="M4.500 6.500h8.500v9.500c-2.500 1-6 1-8.500 0z" fill="url(#bg5)"/></svg>
<span class="bt" style="left:132.7px;top:465.5px"><span class="fx" style="transform:scaleX(1.0151)">赤外線受光<span class="k" style="margin-right:-12.32px">フレーム</span></span></span>
<div class="rb" style="left:76px;top:486.3px;width:130.6px"></div>
<svg class="ic" style="left:79.2px;top:491px" width="16" height="10" viewBox="0 0 16 10"><path d="M.5 5C3 1.300 5.500 .3 8 .3S13 1.300 15.500 5C13 8.700 10.500 9.700 8 9.700S3 8.700 .5 5z" fill="#9a9a9a"/><circle cx="8" cy="5" r="3.300" fill="#d9d9d9"/><circle cx="8" cy="5" r="1.800" fill="#9a9a9a"/></svg>
<svg class="ic" style="left:103.5px;top:487px" width="17" height="18" viewBox="0 0 17 18"><defs><linearGradient id="bg6" x1="0" y1="0" x2="1" y2="0"><stop offset="0" stop-color="#fdfdfd"/><stop offset="1" stop-color="#c9ccd2"/></linearGradient></defs><path d="M1 4.200C1 .8 16 .8 16 4.200V14c0 3.600-15 3.600-15 0z" fill="#fbfbfb" stroke="#4a4f58" stroke-width="1.100"/><path d="M4.500 6.500h8.500v9.500c-2.500 1-6 1-8.500 0z" fill="url(#bg6)"/></svg>
<span class="bt" style="left:132.7px;top:489.5px"><span class="fx" style="transform:scaleX(0.9773)">電源<span class="k" style="margin-right:-15.40px">スイッチ・</span>1</span></span>
<div class="rb" style="left:76px;top:510.3px;width:134.8px"></div>
<svg class="ic" style="left:79.2px;top:515px" width="16" height="10" viewBox="0 0 16 10"><path d="M.5 5C3 1.300 5.500 .3 8 .3S13 1.300 15.500 5C13 8.700 10.500 9.700 8 9.700S3 8.700 .5 5z" fill="#9a9a9a"/><circle cx="8" cy="5" r="3.300" fill="#d9d9d9"/><circle cx="8" cy="5" r="1.800" fill="#9a9a9a"/></svg>
<svg class="ic" style="left:103.5px;top:511px" width="17" height="18" viewBox="0 0 17 18"><defs><linearGradient id="bg7" x1="0" y1="0" x2="1" y2="0"><stop offset="0" stop-color="#fdfdfd"/><stop offset="1" stop-color="#c9ccd2"/></linearGradient></defs><path d="M1 4.200C1 .8 16 .8 16 4.200V14c0 3.600-15 3.600-15 0z" fill="#fbfbfb" stroke="#4a4f58" stroke-width="1.100"/><path d="M4.500 6.500h8.500v9.500c-2.500 1-6 1-8.500 0z" fill="url(#bg7)"/></svg>
<span class="bt" style="left:132.7px;top:513.5px"><span class="fx" style="transform:scaleX(0.9862)">電源<span class="k" style="margin-right:-15.40px">スイッチ・</span>2</span></span>
<div class="rb" style="left:76px;top:534.3px;width:114.5px"></div>
<svg class="ic" style="left:79.2px;top:539px" width="16" height="10" viewBox="0 0 16 10"><path d="M.5 5C3 1.300 5.500 .3 8 .3S13 1.300 15.500 5C13 8.700 10.500 9.700 8 9.700S3 8.700 .5 5z" fill="#9a9a9a"/><circle cx="8" cy="5" r="3.300" fill="#d9d9d9"/><circle cx="8" cy="5" r="1.800" fill="#9a9a9a"/></svg>
<svg class="ic" style="left:103.5px;top:535px" width="17" height="18" viewBox="0 0 17 18"><defs><linearGradient id="bg8" x1="0" y1="0" x2="1" y2="0"><stop offset="0" stop-color="#fdfdfd"/><stop offset="1" stop-color="#c9ccd2"/></linearGradient></defs><path d="M1 4.200C1 .8 16 .8 16 4.200V14c0 3.600-15 3.600-15 0z" fill="#fbfbfb" stroke="#4a4f58" stroke-width="1.100"/><path d="M4.500 6.500h8.500v9.500c-2.500 1-6 1-8.500 0z" fill="url(#bg8)"/></svg>
<span class="bt" style="left:132.7px;top:537.5px"><span class="fx" style="transform:scaleX(0.9895)"><span class="k" style="margin-right:-12.32px">ボディ・</span>足4</span></span>
<div class="rb" style="left:76px;top:558.3px;width:114.5px"></div>
<svg class="ic" style="left:79.2px;top:563px" width="16" height="10" viewBox="0 0 16 10"><path d="M.5 5C3 1.300 5.500 .3 8 .3S13 1.300 15.500 5C13 8.700 10.500 9.700 8 9.700S3 8.700 .5 5z" fill="#9a9a9a"/><circle cx="8" cy="5" r="3.300" fill="#d9d9d9"/><circle cx="8" cy="5" r="1.800" fill="#9a9a9a"/></svg>
<svg class="ic" style="left:103.5px;top:559px" width="17" height="18" viewBox="0 0 17 18"><defs><linearGradient id="bg9" x1="0" y1="0" x2="1" y2="0"><stop offset="0" stop-color="#fdfdfd"/><stop offset="1" stop-color="#c9ccd2"/></linearGradient></defs><path d="M1 4.200C1 .8 16 .8 16 4.200V14c0 3.600-15 3.600-15 0z" fill="#fbfbfb" stroke="#4a4f58" stroke-width="1.100"/><path d="M4.500 6.500h8.500v9.500c-2.500 1-6 1-8.500 0z" fill="url(#bg9)"/></svg>
<span class="bt" style="left:132.7px;top:561.5px"><span class="fx" style="transform:scaleX(0.9895)"><span class="k" style="margin-right:-12.32px">ボディ・</span>足3</span></span>
<div class="rb" style="left:76px;top:582.3px;width:114.5px"></div>
<svg class="ic" style="left:79.2px;top:587px" width="16" height="10" viewBox="0 0 16 10"><path d="M.5 5C3 1.300 5.500 .3 8 .3S13 1.300 15.500 5C13 8.700 10.500 9.700 8 9.700S3 8.700 .5 5z" fill="#9a9a9a"/><circle cx="8" cy="5" r="3.300" fill="#d9d9d9"/><circle cx="8" cy="5" r="1.800" fill="#9a9a9a"/></svg>
<svg class="ic" style="left:103.5px;top:583px" width="17" height="18" viewBox="0 0 17 18"><defs><linearGradient id="bg10" x1="0" y1="0" x2="1" y2="0"><stop offset="0" stop-color="#fdfdfd"/><stop offset="1" stop-color="#c9ccd2"/></linearGradient></defs><path d="M1 4.200C1 .8 16 .8 16 4.200V14c0 3.600-15 3.600-15 0z" fill="#fbfbfb" stroke="#4a4f58" stroke-width="1.100"/><path d="M4.500 6.500h8.500v9.500c-2.500 1-6 1-8.500 0z" fill="url(#bg10)"/></svg>
<span class="bt" style="left:132.7px;top:585.5px"><span class="fx" style="transform:scaleX(0.9895)"><span class="k" style="margin-right:-12.32px">ボディ・</span>足2</span></span>
<div class="rb" style="left:76px;top:606.3px;width:114.5px"></div>
<svg class="ic" style="left:79.2px;top:611px" width="16" height="10" viewBox="0 0 16 10"><path d="M.5 5C3 1.300 5.500 .3 8 .3S13 1.300 15.500 5C13 8.700 10.500 9.700 8 9.700S3 8.700 .5 5z" fill="#9a9a9a"/><circle cx="8" cy="5" r="3.300" fill="#d9d9d9"/><circle cx="8" cy="5" r="1.800" fill="#9a9a9a"/></svg>
<svg class="ic" style="left:103.5px;top:607px" width="17" height="18" viewBox="0 0 17 18"><defs><linearGradient id="bg11" x1="0" y1="0" x2="1" y2="0"><stop offset="0" stop-color="#fdfdfd"/><stop offset="1" stop-color="#c9ccd2"/></linearGradient></defs><path d="M1 4.200C1 .8 16 .8 16 4.200V14c0 3.600-15 3.600-15 0z" fill="#fbfbfb" stroke="#4a4f58" stroke-width="1.100"/><path d="M4.500 6.500h8.500v9.500c-2.500 1-6 1-8.500 0z" fill="url(#bg11)"/></svg>
<span class="bt" style="left:132.7px;top:609.5px"><span class="fx" style="transform:scaleX(0.9895)"><span class="k" style="margin-right:-12.32px">ボディ・</span>足1</span></span>
<div class="rb" style="left:76px;top:630.3px;width:106.80000000000001px"></div>
<svg class="ic" style="left:79.2px;top:635px" width="16" height="10" viewBox="0 0 16 10"><path d="M.5 5C3 1.300 5.500 .3 8 .3S13 1.300 15.500 5C13 8.700 10.500 9.700 8 9.700S3 8.700 .5 5z" fill="#9a9a9a"/><circle cx="8" cy="5" r="3.300" fill="#d9d9d9"/><circle cx="8" cy="5" r="1.800" fill="#9a9a9a"/></svg>
<svg class="ic" style="left:103.5px;top:631px" width="17" height="18" viewBox="0 0 17 18"><defs><linearGradient id="bg12" x1="0" y1="0" x2="1" y2="0"><stop offset="0" stop-color="#fdfdfd"/><stop offset="1" stop-color="#c9ccd2"/></linearGradient></defs><path d="M1 4.200C1 .8 16 .8 16 4.200V14c0 3.600-15 3.600-15 0z" fill="#fbfbfb" stroke="#4a4f58" stroke-width="1.100"/><path d="M4.500 6.500h8.500v9.500c-2.500 1-6 1-8.500 0z" fill="url(#bg12)"/></svg>
<span class="bt" style="left:132.7px;top:633.5px"><span class="fx" style="transform:scaleX(0.9534)"><span class="k" style="margin-right:-12.32px">ボディ・</span>上</span></span>
<div class="rb" style="left:76px;top:654.3px;width:106.80000000000001px"></div>
<svg class="ic" style="left:79.2px;top:659px" width="16" height="10" viewBox="0 0 16 10"><path d="M.5 5C3 1.300 5.500 .3 8 .3S13 1.300 15.500 5C13 8.700 10.500 9.700 8 9.700S3 8.700 .5 5z" fill="#9a9a9a"/><circle cx="8" cy="5" r="3.300" fill="#d9d9d9"/><circle cx="8" cy="5" r="1.800" fill="#9a9a9a"/></svg>
<svg class="ic" style="left:103.5px;top:655px" width="17" height="18" viewBox="0 0 17 18"><defs><linearGradient id="bg13" x1="0" y1="0" x2="1" y2="0"><stop offset="0" stop-color="#fdfdfd"/><stop offset="1" stop-color="#c9ccd2"/></linearGradient></defs><path d="M1 4.200C1 .8 16 .8 16 4.200V14c0 3.600-15 3.600-15 0z" fill="#fbfbfb" stroke="#4a4f58" stroke-width="1.100"/><path d="M4.500 6.500h8.500v9.500c-2.500 1-6 1-8.500 0z" fill="url(#bg13)"/></svg>
<span class="bt" style="left:132.7px;top:657.5px"><span class="fx" style="transform:scaleX(0.9534)"><span class="k" style="margin-right:-12.32px">ボディ・</span>下</span></span>
<div class="rb" style="left:76px;top:678.3px;width:106.80000000000001px"></div>
<svg class="ic" style="left:79.2px;top:683px" width="16" height="10" viewBox="0 0 16 10"><path d="M.5 5C3 1.300 5.500 .3 8 .3S13 1.300 15.500 5C13 8.700 10.500 9.700 8 9.700S3 8.700 .5 5z" fill="#9a9a9a"/><circle cx="8" cy="5" r="3.300" fill="#d9d9d9"/><circle cx="8" cy="5" r="1.800" fill="#9a9a9a"/></svg>
<svg class="ic" style="left:103.5px;top:679px" width="17" height="18" viewBox="0 0 17 18"><defs><linearGradient id="bg14" x1="0" y1="0" x2="1" y2="0"><stop offset="0" stop-color="#fdfdfd"/><stop offset="1" stop-color="#c9ccd2"/></linearGradient></defs><path d="M1 4.200C1 .8 16 .8 16 4.200V14c0 3.600-15 3.600-15 0z" fill="#fbfbfb" stroke="#4a4f58" stroke-width="1.100"/><path d="M4.500 6.500h8.500v9.500c-2.500 1-6 1-8.500 0z" fill="url(#bg14)"/></svg>
<span class="bt" style="left:132.7px;top:681.5px"><span class="fx" style="transform:scaleX(0.9534)"><span class="k" style="margin-right:-12.32px">ボディ・</span>後</span></span>
<div class="rb" style="left:76px;top:702.3px;width:106.80000000000001px"></div>
<svg class="ic" style="left:79.2px;top:707px" width="16" height="10" viewBox="0 0 16 10"><path d="M.5 5C3 1.300 5.500 .3 8 .3S13 1.300 15.500 5C13 8.700 10.500 9.700 8 9.700S3 8.700 .5 5z" fill="#9a9a9a"/><circle cx="8" cy="5" r="3.300" fill="#d9d9d9"/><circle cx="8" cy="5" r="1.800" fill="#9a9a9a"/></svg>
<svg class="ic" style="left:103.5px;top:703px" width="17" height="18" viewBox="0 0 17 18"><defs><linearGradient id="bg15" x1="0" y1="0" x2="1" y2="0"><stop offset="0" stop-color="#fdfdfd"/><stop offset="1" stop-color="#c9ccd2"/></linearGradient></defs><path d="M1 4.200C1 .8 16 .8 16 4.200V14c0 3.600-15 3.600-15 0z" fill="#fbfbfb" stroke="#4a4f58" stroke-width="1.100"/><path d="M4.500 6.500h8.500v9.500c-2.500 1-6 1-8.500 0z" fill="url(#bg15)"/></svg>
<span class="bt" style="left:132.7px;top:705.5px"><span class="fx" style="transform:scaleX(0.9534)"><span class="k" style="margin-right:-12.32px">ボディ・</span>左</span></span>
<div class="rb" style="left:76px;top:726.3px;width:106.80000000000001px"></div>
<svg class="ic" style="left:79.2px;top:731px" width="16" height="10" viewBox="0 0 16 10"><path d="M.5 5C3 1.300 5.500 .3 8 .3S13 1.300 15.500 5C13 8.700 10.500 9.700 8 9.700S3 8.700 .5 5z" fill="#9a9a9a"/><circle cx="8" cy="5" r="3.300" fill="#d9d9d9"/><circle cx="8" cy="5" r="1.800" fill="#9a9a9a"/></svg>
<svg class="ic" style="left:103.5px;top:727px" width="17" height="18" viewBox="0 0 17 18"><defs><linearGradient id="bg16" x1="0" y1="0" x2="1" y2="0"><stop offset="0" stop-color="#fdfdfd"/><stop offset="1" stop-color="#c9ccd2"/></linearGradient></defs><path d="M1 4.200C1 .8 16 .8 16 4.200V14c0 3.600-15 3.600-15 0z" fill="#fbfbfb" stroke="#4a4f58" stroke-width="1.100"/><path d="M4.500 6.500h8.500v9.500c-2.500 1-6 1-8.500 0z" fill="url(#bg16)"/></svg>
<span class="bt" style="left:132.7px;top:729.5px"><span class="fx" style="transform:scaleX(0.9534)"><span class="k" style="margin-right:-12.32px">ボディ・</span>右</span></span>
<div class="rb" style="left:76px;top:750.3px;width:106.80000000000001px"></div>
<svg class="ic" style="left:79.2px;top:755px" width="16" height="10" viewBox="0 0 16 10"><path d="M.5 5C3 1.300 5.500 .3 8 .3S13 1.300 15.500 5C13 8.700 10.500 9.700 8 9.700S3 8.700 .5 5z" fill="#9a9a9a"/><circle cx="8" cy="5" r="3.300" fill="#d9d9d9"/><circle cx="8" cy="5" r="1.800" fill="#9a9a9a"/></svg>
<svg class="ic" style="left:103.5px;top:751px" width="17" height="18" viewBox="0 0 17 18"><defs><linearGradient id="bg17" x1="0" y1="0" x2="1" y2="0"><stop offset="0" stop-color="#fdfdfd"/><stop offset="1" stop-color="#c9ccd2"/></linearGradient></defs><path d="M1 4.200C1 .8 16 .8 16 4.200V14c0 3.600-15 3.600-15 0z" fill="#fbfbfb" stroke="#4a4f58" stroke-width="1.100"/><path d="M4.500 6.500h8.500v9.500c-2.500 1-6 1-8.500 0z" fill="url(#bg17)"/></svg>
<span class="bt" style="left:132.7px;top:753.5px"><span class="fx" style="transform:scaleX(0.9534)"><span class="k" style="margin-right:-12.32px">ボディ・</span>底</span></span>
<div class="rb" style="left:76px;top:774.3px;width:126.9px"></div>
<svg class="ic" style="left:79.2px;top:779px" width="16" height="10" viewBox="0 0 16 10"><path d="M.5 5C3 1.300 5.500 .3 8 .3S13 1.300 15.500 5C13 8.700 10.500 9.700 8 9.700S3 8.700 .5 5z" fill="#9a9a9a"/><circle cx="8" cy="5" r="3.300" fill="#d9d9d9"/><circle cx="8" cy="5" r="1.800" fill="#9a9a9a"/></svg>
<svg class="ic" style="left:103.5px;top:775px" width="17" height="18" viewBox="0 0 17 18"><defs><linearGradient id="bg18" x1="0" y1="0" x2="1" y2="0"><stop offset="0" stop-color="#fdfdfd"/><stop offset="1" stop-color="#c9ccd2"/></linearGradient></defs><path d="M1 4.200C1 .8 16 .8 16 4.200V14c0 3.600-15 3.600-15 0z" fill="#fbfbfb" stroke="#4a4f58" stroke-width="1.100"/><path d="M4.500 6.500h8.500v9.500c-2.500 1-6 1-8.500 0z" fill="url(#bg18)"/></svg>
<span class="bt" style="left:132.7px;top:777.5px"><span class="fx" style="transform:scaleX(0.9657)"><span class="k" style="margin-right:-24.64px">ボディ・フロント</span></span></span>
<div class="rb" style="left:58px;top:798.3px;width:85.80000000000001px"></div>
<svg class="ic" style="left:59.5px;top:800px" width="18" height="16" viewBox="0 0 18 16"><path d="M1 13l10.500 0 2.500-2.500v2l-2.500 3H1z" fill="#c2c2c2"/><path d="M1 3.500l2.500-3h10.500l-2.500 3z" fill="#8ccaf8"/><path d="M1 3.500h10.500v10H1z" fill="#5fa8e2"/><path d="M11.500 3.500l2.500-3v10l-2.500 3z" fill="#3f86c8"/><path d="M16.5 13V2.5" stroke="#333" stroke-width=".9"/><path d="M15.2 3.6L16.5 .6l1.300 3z" fill="#333"/></svg>
<span class="bt" style="left:90px;top:801.5px"><span class="fx" style="transform:scaleX(1.0394)">押<span class="k" style="margin-right:-3.08px">し</span>出<span class="k" style="margin-right:-3.08px">し</span>3</span></span>
<div class="rb" style="left:58px;top:822.3px;width:85.80000000000001px"></div>
<svg class="ic" style="left:59.5px;top:824px" width="18" height="16" viewBox="0 0 18 16"><path d="M1 13l10.500 0 2.500-2.500v2l-2.500 3H1z" fill="#c2c2c2"/><path d="M1 3.500l2.500-3h10.500l-2.500 3z" fill="#8ccaf8"/><path d="M1 3.500h10.500v10H1z" fill="#5fa8e2"/><path d="M11.500 3.500l2.500-3v10l-2.500 3z" fill="#3f86c8"/><path d="M16.5 13V2.5" stroke="#333" stroke-width=".9"/><path d="M15.2 3.6L16.5 .6l1.300 3z" fill="#333"/></svg>
<span class="bt" style="left:90px;top:825.5px"><span class="fx" style="transform:scaleX(1.0394)">押<span class="k" style="margin-right:-3.08px">し</span>出<span class="k" style="margin-right:-3.08px">し</span>6</span></span>
<div class="rb" style="left:58px;top:846.3px;width:85.80000000000001px"></div>
<svg class="ic" style="left:59.5px;top:848px" width="18" height="16" viewBox="0 0 18 16"><path d="M1 13l10.500 0 2.500-2.500v2l-2.500 3H1z" fill="#c2c2c2"/><path d="M1 3.500l2.500-3h10.500l-2.500 3z" fill="#8ccaf8"/><path d="M1 3.500h10.500v10H1z" fill="#5fa8e2"/><path d="M11.500 3.500l2.500-3v10l-2.500 3z" fill="#3f86c8"/><path d="M16.5 13V2.5" stroke="#333" stroke-width=".9"/><path d="M15.2 3.6L16.5 .6l1.300 3z" fill="#333"/></svg>
<span class="bt" style="left:90px;top:849.5px"><span class="fx" style="transform:scaleX(1.0394)">押<span class="k" style="margin-right:-3.08px">し</span>出<span class="k" style="margin-right:-3.08px">し</span>8</span></span>
<div class="rb" style="left:58px;top:870.3px;width:85.80000000000001px"></div>
<svg class="ic" style="left:59.5px;top:872px" width="18" height="16" viewBox="0 0 18 16"><path d="M1 13l10.500 0 2.500-2.500v2l-2.500 3H1z" fill="#c2c2c2"/><path d="M1 3.500l2.500-3h10.500l-2.500 3z" fill="#8ccaf8"/><path d="M1 3.500h10.500v10H1z" fill="#5fa8e2"/><path d="M11.500 3.500l2.500-3v10l-2.500 3z" fill="#3f86c8"/><path d="M16.5 13V2.5" stroke="#333" stroke-width=".9"/><path d="M15.2 3.6L16.5 .6l1.300 3z" fill="#333"/></svg>
<span class="bt" style="left:90px;top:873.5px"><span class="fx" style="transform:scaleX(1.0394)">押<span class="k" style="margin-right:-3.08px">し</span>出<span class="k" style="margin-right:-3.08px">し</span>9</span></span>
<div class="rb" style="left:58px;top:894.3px;width:95px"></div>
<svg class="ic" style="left:59.5px;top:896px" width="18" height="16" viewBox="0 0 18 16"><path d="M1 13l10.500 0 2.500-2.500v2l-2.500 3H1z" fill="#c2c2c2"/><path d="M1 3.500l2.500-3h10.500l-2.500 3z" fill="#8ccaf8"/><path d="M1 3.500h10.500v10H1z" fill="#5fa8e2"/><path d="M11.500 3.500l2.500-3v10l-2.500 3z" fill="#3f86c8"/><path d="M16.5 13V2.5" stroke="#333" stroke-width=".9"/><path d="M15.2 3.6L16.5 .6l1.300 3z" fill="#333"/></svg>
<span class="bt" style="left:90px;top:897.5px"><span class="fx" style="transform:scaleX(1.0460)">押<span class="k" style="margin-right:-3.08px">し</span>出<span class="k" style="margin-right:-3.08px">し</span>10</span></span>
<div class="rb" style="left:58px;top:918.3px;width:95px"></div>
<svg class="ic" style="left:59.5px;top:920px" width="18" height="16" viewBox="0 0 18 16"><path d="M1 13l10.500 0 2.500-2.500v2l-2.500 3H1z" fill="#c2c2c2"/><path d="M1 3.500l2.500-3h10.500l-2.500 3z" fill="#8ccaf8"/><path d="M1 3.500h10.500v10H1z" fill="#5fa8e2"/><path d="M11.500 3.500l2.500-3v10l-2.500 3z" fill="#3f86c8"/><path d="M16.5 13V2.5" stroke="#333" stroke-width=".9"/><path d="M15.2 3.6L16.5 .6l1.300 3z" fill="#333"/></svg>
<span class="bt" style="left:90px;top:921.5px"><span class="fx" style="transform:scaleX(1.0460)">押<span class="k" style="margin-right:-3.08px">し</span>出<span class="k" style="margin-right:-3.08px">し</span>29</span></span>
<div class="rb" style="left:58px;top:942.3px;width:95px"></div>
<svg class="ic" style="left:59.5px;top:944px" width="18" height="16" viewBox="0 0 18 16"><path d="M1 13l10.500 0 2.500-2.500v2l-2.500 3H1z" fill="#c2c2c2"/><path d="M1 3.500l2.500-3h10.500l-2.500 3z" fill="#8ccaf8"/><path d="M1 3.500h10.500v10H1z" fill="#5fa8e2"/><path d="M11.500 3.500l2.500-3v10l-2.500 3z" fill="#3f86c8"/><path d="M16.5 13V2.5" stroke="#333" stroke-width=".9"/><path d="M15.2 3.6L16.5 .6l1.300 3z" fill="#333"/></svg>
<span class="bt" style="left:90px;top:945.5px"><span class="fx" style="transform:scaleX(1.0460)">押<span class="k" style="margin-right:-3.08px">し</span>出<span class="k" style="margin-right:-3.08px">し</span>33</span></span>
<div class="rb" style="left:58px;top:966.3px;width:95px"></div>
<svg class="ic" style="left:59.5px;top:968px" width="18" height="16" viewBox="0 0 18 16"><path d="M1 13l10.500 0 2.500-2.500v2l-2.500 3H1z" fill="#c2c2c2"/><path d="M1 3.500l2.500-3h10.500l-2.500 3z" fill="#8ccaf8"/><path d="M1 3.500h10.500v10H1z" fill="#5fa8e2"/><path d="M11.500 3.500l2.500-3v10l-2.500 3z" fill="#3f86c8"/><path d="M16.5 13V2.5" stroke="#333" stroke-width=".9"/><path d="M15.2 3.6L16.5 .6l1.300 3z" fill="#333"/></svg>
<span class="bt" style="left:90px;top:969.5px"><span class="fx" style="transform:scaleX(1.0460)">押<span class="k" style="margin-right:-3.08px">し</span>出<span class="k" style="margin-right:-3.08px">し</span>37</span></span>
<div id="cm"><span class="bt" style="left:23.3px;top:6px"><span class="fx" style="transform:scaleX(0.9941)"><span class="k" style="margin-right:-12.32px">コメント</span></span></span><svg class="ic" style="left:277.500px;top:8px" width="22" height="11" viewBox="0 0 22 11"><circle cx="5" cy="5.500" r="4.600" fill="#222"/><rect x="2.300" y="4.700" width="5.400" height="1.600" fill="#fff"/><rect x="4.200" y="2.800" width="1.600" height="5.400" fill="#fff"/><path d="M17.500 .5v10" stroke="#555" stroke-width="1"/><path d="M19.500 2.500v6" stroke="#999" stroke-width="1"/></svg></div>
<div id="nav"></div>
<svg id="navi" width="237" height="23.5" viewBox="841 1008 237 23.5" style="position:absolute;left:841px;top:1008px">
<g stroke="#333" fill="none" stroke-width="1.200"><path d="M852 1012v16"/><ellipse cx="852" cy="1021.500" rx="6.500" ry="2.600"/></g><path d="M849.500 1013.500l2.500-3.500 2.500 3.500z" fill="#333"/><path d="M844 1024.500l4.500-1-3 4z" fill="#333"/>
<path d="M864.300 1018.500h6l-3 3.500z" fill="#333"/>
<rect x="878.500" y="1016.500" width="13.500" height="10.500" fill="#e9e9e9" stroke="#333" stroke-width="1.100"/><rect x="881" y="1020.500" width="8.500" height="3.500" fill="#8fb5d9" stroke="#333" stroke-width=".8"/><path d="M879.500 1016l4-3.500 2 2 4-2v3.500" fill="none" stroke="#555" stroke-width="1"/>
<path d="M906.2 1023 L904 1020.3 Q903.3 1019 904.4 1018.6 Q905.4 1018.3 906.1 1019.4 L906.9 1020.6 V1016 Q906.9 1014.8 908.1 1014.8 Q909.3 1014.8 909.3 1016 V1019.8 V1014.2 Q909.3 1013 910.6 1013 Q911.9 1013 911.9 1014.2 V1019.8 V1014.6 Q911.9 1013.4 913.2 1013.4 Q914.5 1013.4 914.5 1014.6 V1020 V1016.4 Q914.5 1015.3 915.7 1015.3 Q916.9 1015.3 916.9 1016.4 V1022.5 Q916.9 1025.3 915.2 1027 H908.6 Q907.2 1025 906.2 1023 Z" fill="#f4f6f8" stroke="#333" stroke-width=".9" stroke-linejoin="round"/>
<circle cx="934.500" cy="1019" r="4.800" fill="#dcecf8" stroke="#333" stroke-width="1.200"/><path d="M938 1022.500l4.500 4.500" stroke="#333" stroke-width="2.200"/><path d="M941 1013.500h4M943 1011.500v4M941.500 1018.500h3.500" stroke="#333" stroke-width="1"/>
<rect x="955" y="1012" width="13" height="13" fill="none" stroke="#555" stroke-width=".9" stroke-dasharray="2 1.500"/><circle cx="961.500" cy="1018.500" r="5.300" fill="#dcecf8" stroke="#333" stroke-width="1.200"/><path d="M965.500 1022.500l4.500 4.500" stroke="#333" stroke-width="2.200"/>
<path d="M976 1018.500h6l-3 3.500z" fill="#333"/>
<rect x="988.500" y="1013" width="15" height="11" fill="#6d9fd6" stroke="#333" stroke-width="1.200"/><rect x="990.500" y="1015" width="11" height="7" fill="#a9c9ec"/><path d="M996 1024v2.500M991.500 1027.500h9" stroke="#333" stroke-width="1.300"/>
<path d="M1006 1018.500h6l-3 3.500z" fill="#333"/>
<rect x="1019" y="1012.500" width="14" height="14" fill="#dcdcdc" stroke="#555" stroke-width="1"/><path d="M1022.500 1012.500v14M1026 1012.500v14M1029.500 1012.500v14M1019 1016h14M1019 1019.500h14M1019 1023h14" stroke="#555" stroke-width=".8"/>
<path d="M1036.500 1018.500h6l-3 3.500z" fill="#333"/>
<g fill="#6d9fd6" stroke="#2f5f98" stroke-width=".9"><rect x="1050" y="1013.500" width="6" height="5"/><rect x="1057.500" y="1013.500" width="6" height="5"/><rect x="1050" y="1020" width="6" height="5"/><rect x="1057.500" y="1020" width="6" height="5"/></g>
<path d="M1067 1018.500h6l-3 3.500z" fill="#333"/>
</svg>
<div id="bl"></div><div id="tb"></div><div id="tb2"></div>
<span style="position:absolute;left:1872px;top:1046px;font:bold 9px 'Liberation Sans',sans-serif;color:#fff;white-space:nowrap;letter-spacing:.3px">17:33</span>
<div style="position:absolute;left:1920px;top:0;width:8px;height:34px;background:#e9e9f2;border-radius:0 0 0 7px"></div>
<div style="position:absolute;left:1920px;top:70px;width:8px;height:1px;background:#d0d0d0"></div>
</body></html>
